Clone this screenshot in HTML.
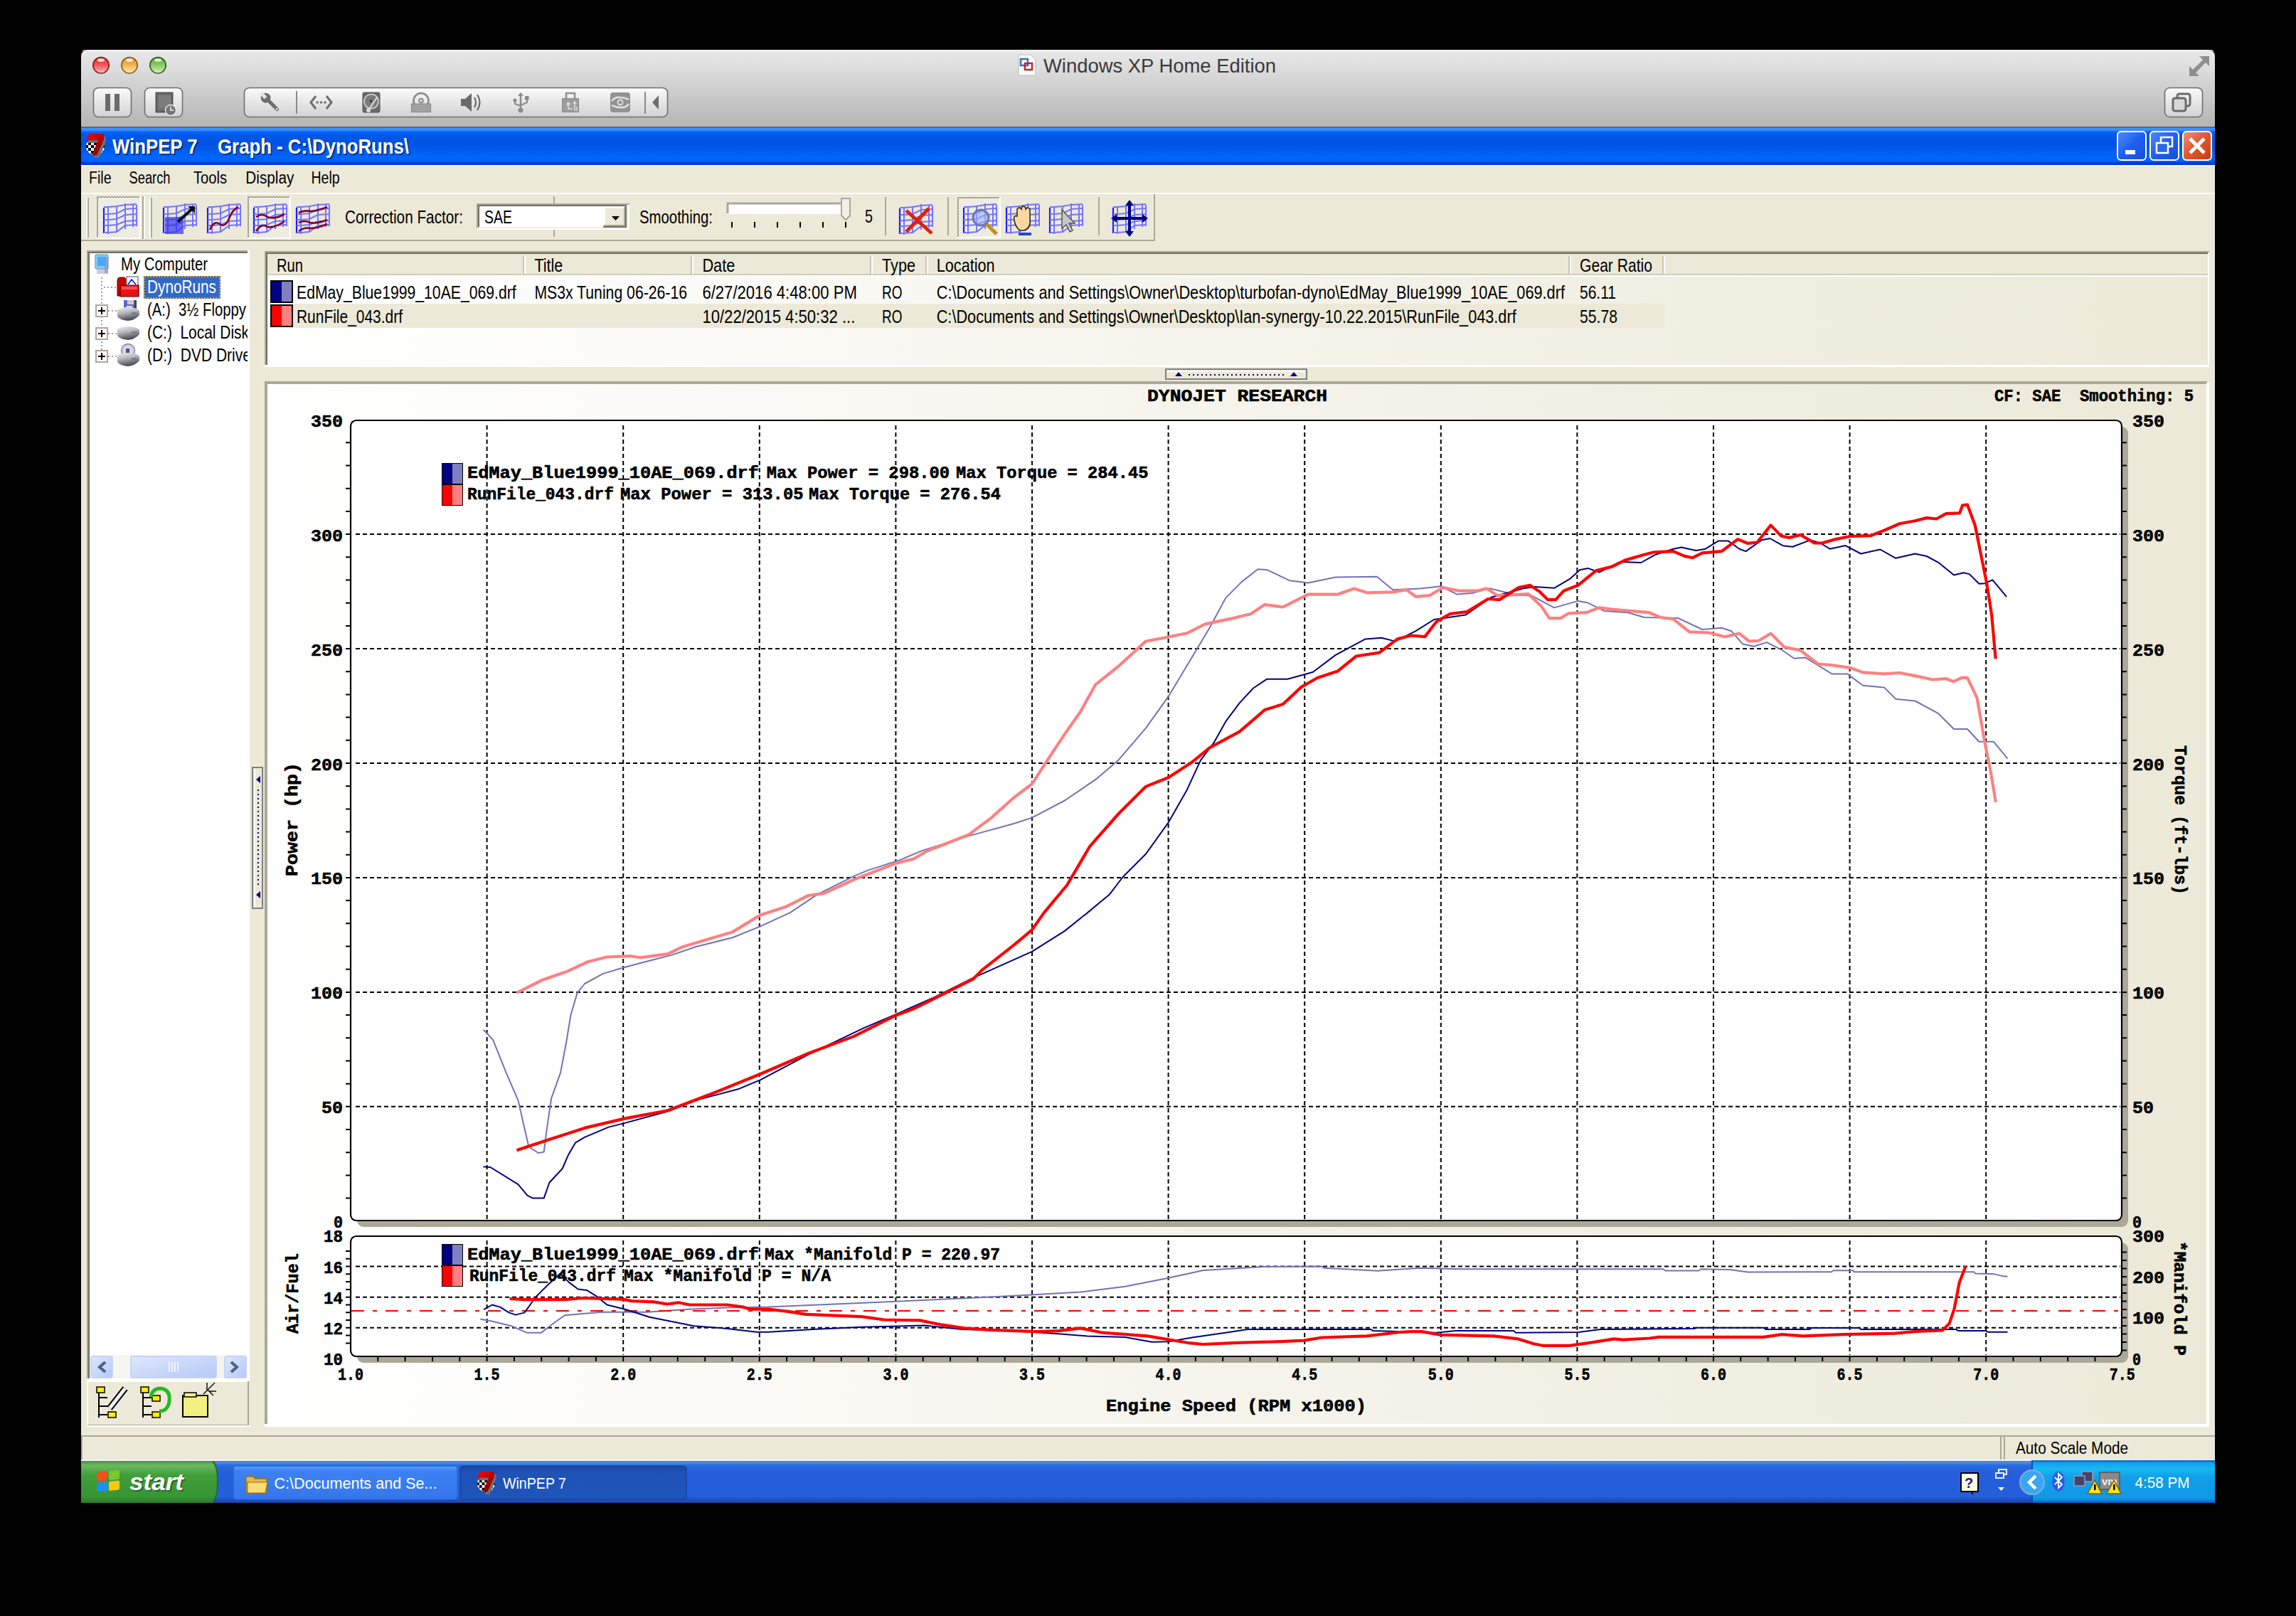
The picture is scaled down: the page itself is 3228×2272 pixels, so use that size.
<!DOCTYPE html>
<html><head><meta charset="utf-8"><title>WinPEP 7</title>
<style>
html,body{margin:0;padding:0;background:#000;width:3228px;height:2272px;overflow:hidden}
svg{position:absolute;left:0;top:0;display:block}
text{white-space:pre}
</style></head><body>
<svg width="3228" height="2272" viewBox="0 0 3228 2272" shape-rendering="auto">
<defs>
<linearGradient id="macbar" x1="0" y1="0" x2="0" y2="1">
<stop offset="0" stop-color="#ececec"/><stop offset="0.06" stop-color="#e6e6e6"/>
<stop offset="1" stop-color="#b4b4b4"/></linearGradient>
<linearGradient id="macbtn" x1="0" y1="0" x2="0" y2="1">
<stop offset="0" stop-color="#fbfbfb"/><stop offset="1" stop-color="#d2d2d2"/></linearGradient>
<linearGradient id="tl_red" x1="0" y1="0" x2="0" y2="1">
<stop offset="0" stop-color="#e23a36"/><stop offset="0.45" stop-color="#f25252"/><stop offset="0.75" stop-color="#f68a8a"/><stop offset="1" stop-color="#f6cccc"/></linearGradient>
<linearGradient id="tl_yel" x1="0" y1="0" x2="0" y2="1">
<stop offset="0" stop-color="#e0902c"/><stop offset="0.45" stop-color="#f0b050"/><stop offset="0.75" stop-color="#f6d07a"/><stop offset="1" stop-color="#f8ecc0"/></linearGradient>
<linearGradient id="tl_grn" x1="0" y1="0" x2="0" y2="1">
<stop offset="0" stop-color="#5cae3e"/><stop offset="0.45" stop-color="#86c866"/><stop offset="0.75" stop-color="#b0dc8a"/><stop offset="1" stop-color="#e4f2d0"/></linearGradient>

<linearGradient id="xptitle" x1="0" y1="180" x2="0" y2="232" gradientUnits="userSpaceOnUse">
<stop offset="0" stop-color="#3e97ff"/><stop offset="0.07" stop-color="#3088ff"/><stop offset="0.1" stop-color="#0066ff"/>
<stop offset="0.2" stop-color="#0058e8"/><stop offset="0.42" stop-color="#0052e0"/><stop offset="0.62" stop-color="#005cf0"/>
<stop offset="0.8" stop-color="#0066ff"/><stop offset="0.9" stop-color="#0062f8"/><stop offset="0.93" stop-color="#0044d8"/><stop offset="1" stop-color="#0035c8"/></linearGradient>
<linearGradient id="xpbtn" x1="0" y1="0" x2="1" y2="1">
<stop offset="0" stop-color="#4f8cf7"/><stop offset="0.5" stop-color="#1f5ff0"/><stop offset="1" stop-color="#1450d8"/></linearGradient>
<linearGradient id="xpclose" x1="0" y1="0" x2="1" y2="1">
<stop offset="0" stop-color="#f0957a"/><stop offset="0.45" stop-color="#e05a32"/><stop offset="1" stop-color="#c83a10"/></linearGradient>
<linearGradient id="listbg" x1="0" y1="0" x2="1" y2="0">
<stop offset="0" stop-color="#ffffff"/><stop offset="1" stop-color="#ece9d8"/></linearGradient>
<linearGradient id="chartbg" x1="376" y1="0" x2="3102" y2="0" gradientUnits="userSpaceOnUse">
<stop offset="0" stop-color="#ffffff"/><stop offset="1" stop-color="#ece9d8"/></linearGradient>
<pattern id="checker" width="4" height="4" patternUnits="userSpaceOnUse">
<rect width="4" height="4" fill="#fbfaf6"/><rect width="2" height="2" fill="#e2dfcf"/><rect x="2" y="2" width="2" height="2" fill="#e2dfcf"/></pattern>
<linearGradient id="scrbtn" x1="0" y1="0" x2="1" y2="1">
<stop offset="0" stop-color="#dfe8fd"/><stop offset="1" stop-color="#b4c8f6"/></linearGradient>

<pattern id="flagchk" width="8" height="8" patternUnits="userSpaceOnUse">
<rect width="8" height="8" fill="#fff"/><rect width="4" height="4" fill="#000"/><rect x="4" y="4" width="4" height="4" fill="#000"/></pattern>
<linearGradient id="red7" x1="0" y1="0" x2="1" y2="1"><stop offset="0" stop-color="#ff0000"/><stop offset="0.6" stop-color="#b00000"/><stop offset="1" stop-color="#500000"/></linearGradient>
<clipPath id="clipTree"><rect x="126" y="356" width="222" height="1548"/></clipPath>
<linearGradient id="drivebody" x1="0" y1="0" x2="0.3" y2="1">
<stop offset="0" stop-color="#f2f2f2"/><stop offset="0.45" stop-color="#b8b8bc"/><stop offset="1" stop-color="#4c4c58"/></linearGradient>
<radialGradient id="cdg" cx="0.5" cy="0.5" r="0.5"><stop offset="0" stop-color="#fff"/><stop offset="0.25" stop-color="#f0c8f0"/><stop offset="0.6" stop-color="#d8d8ff"/><stop offset="1" stop-color="#b8b8e8"/></radialGradient>
<clipPath id="clipU"><rect x="494" y="592" width="2488" height="1123"/></clipPath>
<clipPath id="clipL"><rect x="494" y="1739" width="2488" height="167"/></clipPath>
<linearGradient id="taskbar" x1="0" y1="2053" x2="0" y2="2113" gradientUnits="userSpaceOnUse">
<stop offset="0" stop-color="#3168d5"/><stop offset="0.05" stop-color="#4993e6"/><stop offset="0.12" stop-color="#2a6ae0"/>
<stop offset="0.3" stop-color="#245edb"/><stop offset="0.85" stop-color="#245edb"/><stop offset="1" stop-color="#1941a5"/></linearGradient>
<linearGradient id="startbtn" x1="0" y1="2053" x2="0" y2="2113" gradientUnits="userSpaceOnUse">
<stop offset="0" stop-color="#3c8d3a"/><stop offset="0.12" stop-color="#6abb5e"/><stop offset="0.35" stop-color="#3f9e3a"/>
<stop offset="0.85" stop-color="#379534"/><stop offset="1" stop-color="#2b7a2a"/></linearGradient>
<linearGradient id="tray" x1="0" y1="2053" x2="0" y2="2113" gradientUnits="userSpaceOnUse">
<stop offset="0" stop-color="#0c59b9"/><stop offset="0.06" stop-color="#139ee9"/><stop offset="0.2" stop-color="#18b9f2"/>
<stop offset="0.4" stop-color="#109fe8"/><stop offset="0.9" stop-color="#0f98e6"/><stop offset="1" stop-color="#095bc9"/></linearGradient>
<linearGradient id="task1" x1="0" y1="2061" x2="0" y2="2108" gradientUnits="userSpaceOnUse">
<stop offset="0" stop-color="#5a9cf7"/><stop offset="0.15" stop-color="#3c81f3"/><stop offset="1" stop-color="#3677ec"/></linearGradient>
<linearGradient id="task2" x1="0" y1="2061" x2="0" y2="2108" gradientUnits="userSpaceOnUse">
<stop offset="0" stop-color="#1a47a8"/><stop offset="0.2" stop-color="#1e52b7"/><stop offset="1" stop-color="#1f55ba"/></linearGradient>

</defs>
<rect x="0" y="0" width="3228" height="2272" fill="#000"/>
<path d="M114,180 L114,80 Q114,70 124,70 L3104,70 Q3114,70 3114,80 L3114,180 Z" fill="url(#macbar)"/>
<path d="M116,71 L3112,71" stroke="#f8f8f8" stroke-width="1"/>
<rect x="114" y="178" width="3000" height="2" fill="#666" />
<circle cx="142" cy="91.8" r="11.2" fill="url(#tl_red)" stroke="#8c1414" stroke-width="1.6"/>
<ellipse cx="142" cy="84.5" rx="5" ry="2.2" fill="#fff" fill-opacity="0.8"/>
<circle cx="182" cy="91.8" r="11.2" fill="url(#tl_yel)" stroke="#8a5c14" stroke-width="1.6"/>
<ellipse cx="182" cy="84.5" rx="5" ry="2.2" fill="#fff" fill-opacity="0.8"/>
<circle cx="222" cy="91.8" r="11.2" fill="url(#tl_grn)" stroke="#2e5e1e" stroke-width="1.6"/>
<ellipse cx="222" cy="84.5" rx="5" ry="2.2" fill="#fff" fill-opacity="0.8"/>
<g transform="translate(1432,77)"><path d="M0,0 h17 l7,7 v22 h-24 z" fill="#fafafa" stroke="#bbb" stroke-width="1"/><rect x="3" y="6" width="10" height="9" fill="none" stroke="#3b6fb6" stroke-width="2.5"/><rect x="9" y="12" width="10" height="9" fill="none" stroke="#c0272d" stroke-width="2.5"/></g>
<text x="1467" y="102" font-family='"Liberation Sans", sans-serif' font-size="28.5" font-weight="normal" fill="#3a3a3a" text-anchor="start" textLength="327" lengthAdjust="spacingAndGlyphs" >Windows XP Home Edition</text>
<g fill="#8e8e8e" stroke="none"><path d="M3106,79 V93 L3101,88 L3094,95 L3090,91 L3097,84 L3092,79 Z"/><path d="M3078,107 V93 L3083,98 L3090,91 L3094,95 L3087,102 L3092,107 Z"/></g>
<rect x="131.5" y="123.5" width="53" height="41" rx="7" fill="url(#macbtn)" stroke="#6f6f6f" stroke-width="1.6"/>
<rect x="148" y="132" width="7" height="24" fill="#6a6a6a"/><rect x="161" y="132" width="7" height="24" fill="#6a6a6a"/>
<rect x="203.5" y="123.5" width="53" height="41" rx="7" fill="url(#macbtn)" stroke="#6f6f6f" stroke-width="1.6"/>
<rect x="219.5" y="130.5" width="23" height="27" fill="#6e6e6e" stroke="#555" stroke-width="2"/><rect x="223" y="134" width="17" height="18" fill="#7c7c7c"/><circle cx="240" cy="155" r="7.5" fill="#757575" stroke="#e6e6e6" stroke-width="1.5"/><path d="M240,150 v5 h4" stroke="#eee" stroke-width="1.6" fill="none"/>
<rect x="343.5" y="123.5" width="595" height="41" rx="7" fill="url(#macbtn)" stroke="#6f6f6f" stroke-width="1.6"/>
<rect x="3043.5" y="123.5" width="53" height="41" rx="7" fill="url(#macbtn)" stroke="#6f6f6f" stroke-width="1.6"/>
<rect x="3061" y="132" width="18" height="17" rx="3" fill="none" stroke="#6a6a6a" stroke-width="3"/><rect x="3055" y="138" width="18" height="18" rx="3" fill="#d8d8d8" stroke="#6a6a6a" stroke-width="3"/>
<g transform="translate(380,144) rotate(-45)"><rect x="-2.5" y="-6" width="5" height="22" rx="2.5" fill="#6e6e6e"/><circle cx="0" cy="-9" r="7" fill="#6e6e6e"/><rect x="-2.5" y="-18" width="5" height="9" fill="#e2e2e2"/><circle cx="0" cy="13" r="1.5" fill="#ddd"/></g>
<rect x="416" y="128" width="2" height="32" fill="#8a8a8a" />
<path d="M444,135 l-7,9 l7,9 M459,135 l7,9 l-7,9" stroke="#6e6e6e" stroke-width="3" fill="none"/><circle cx="446" cy="144" r="1.8" fill="#6e6e6e"/><circle cx="451.5" cy="144" r="1.8" fill="#6e6e6e"/><circle cx="457" cy="144" r="1.8" fill="#6e6e6e"/>
<rect x="510" y="130" width="24" height="28" rx="2" fill="#6a6a6a" stroke="#555" stroke-width="1"/><circle cx="522" cy="142.5" r="10" fill="#7a7a7a" stroke="#d6d6d6" stroke-width="1.6"/><path d="M518,155 L530,137" stroke="#e0e0e0" stroke-width="2"/><circle cx="518" cy="155" r="3" fill="#d8d8d8"/><circle cx="521.5" cy="142" r="1.8" fill="#333"/>
<circle cx="592" cy="141.5" r="10.5" fill="none" stroke="#8a8a8a" stroke-width="2.6"/><circle cx="592" cy="141.5" r="2.8" fill="none" stroke="#8a8a8a" stroke-width="2"/><rect x="578.5" y="146" width="27" height="11.5" fill="#a2a2a2" stroke="#8c8c8c" stroke-width="1.2"/>
<path d="M648,139 h6 l9,-8 v26 l-9,-8 h-6 z" fill="#6a6a6a"/><path d="M667,137 q4,7 0,14 M671,133 q7,11 0,22" stroke="#6a6a6a" stroke-width="2.2" fill="none"/>
<path d="M732,131 v23" stroke="#8c8c8c" stroke-width="2.5"/><path d="M728,135 l4,-5 l4,5 z" fill="#8c8c8c"/><circle cx="732" cy="155" r="3.5" fill="#8c8c8c"/><path d="M724,141 v5 l8,3 M741,139 v5 l-9,4" stroke="#8c8c8c" stroke-width="2" fill="none"/><circle cx="724" cy="141" r="2.6" fill="#8c8c8c"/><rect x="738" y="135" width="5.5" height="5.5" fill="#8c8c8c"/>
<rect x="790.5" y="138.5" width="23" height="19" fill="#9c9c9c" stroke="#8a8a8a" stroke-width="1"/><path d="M796,138 v-7 h12 v7" stroke="#8e8e8e" stroke-width="2.5" fill="none"/><circle cx="799" cy="146" r="2.5" fill="#dadada"/><path d="M799,148 v5 h6 M808,156 v-13 M806,146 l2,-3 l2,3 M811,156 v-6" stroke="#dadada" stroke-width="1.6" fill="none"/>
<rect x="858" y="130" width="28" height="28" rx="4" fill="#929292"/><path d="M860,142 q4,-6 12,-5 q6,0 12,3 M884,146 q-4,6 -12,5 q-6,0 -12,-3" stroke="#dedede" stroke-width="2.6" fill="none"/><circle cx="872" cy="144" r="3.5" fill="none" stroke="#dedede" stroke-width="2"/>
<rect x="906" y="129" width="2" height="31" fill="#8a8a8a" />
<path d="M926,134 v20 l-9,-10 z" fill="#6e6e6e"/>
<rect x="114" y="180" width="3000" height="1873" fill="#ece9d8" />
<rect x="114" y="180" width="3000" height="52" fill="url(#xptitle)" />
<g transform="translate(120,188) scale(1.0)"><ellipse cx="14" cy="18" rx="13" ry="12" fill="url(#flagchk)"/><path d="M6,2 H27 V9 L17,32 H10 L19,11 H2 V8 Z" fill="#6e6e6e" transform="translate(2,2)"/><path d="M6,0 H26 V8 L16,30 H9 L18,9 H2 V5 Z" fill="url(#red7)"/></g>
<text x="160" y="218" font-family='"Liberation Sans", sans-serif' font-size="30" font-weight="bold" fill="#0a246a" textLength="417" lengthAdjust="spacingAndGlyphs" opacity="0.7">WinPEP 7    Graph - C:\DynoRuns\</text>
<text x="158" y="216" font-family='"Liberation Sans", sans-serif' font-size="30" font-weight="bold" fill="#fff" text-anchor="start" textLength="417" lengthAdjust="spacingAndGlyphs" >WinPEP 7    Graph - C:\DynoRuns\</text>
<rect x="2977" y="185" width="40" height="40" rx="5" fill="url(#xpbtn)" stroke="#fff" stroke-width="2"/><rect x="2988" y="211" width="14" height="6" fill="#fff"/>
<rect x="3023" y="185" width="40" height="40" rx="5" fill="url(#xpbtn)" stroke="#fff" stroke-width="2"/><rect x="3038" y="193" width="16" height="13" fill="none" stroke="#fff" stroke-width="2.5"/><rect x="3032" y="201" width="16" height="14" fill="#2a68ee" stroke="#fff" stroke-width="2.5"/>
<rect x="3069" y="185" width="40" height="40" rx="5" fill="url(#xpclose)" stroke="#fff" stroke-width="2"/><path d="M3079,195 l20,20 M3099,195 l-20,20" stroke="#fff" stroke-width="5"/>
<rect x="114" y="232" width="3000" height="2" fill="#fbf6e6" />
<text x="125" y="257.5" font-family='"Liberation Sans", sans-serif' font-size="23" font-weight="normal" fill="#000" text-anchor="start" textLength="31.5" lengthAdjust="spacingAndGlyphs" >File</text>
<text x="181.5" y="257.5" font-family='"Liberation Sans", sans-serif' font-size="23" font-weight="normal" fill="#000" text-anchor="start" textLength="58" lengthAdjust="spacingAndGlyphs" >Search</text>
<text x="272" y="257.5" font-family='"Liberation Sans", sans-serif' font-size="23" font-weight="normal" fill="#000" text-anchor="start" textLength="47" lengthAdjust="spacingAndGlyphs" >Tools</text>
<text x="345.3" y="257.5" font-family='"Liberation Sans", sans-serif' font-size="23" font-weight="normal" fill="#000" text-anchor="start" textLength="68" lengthAdjust="spacingAndGlyphs" >Display</text>
<text x="437.5" y="257.5" font-family='"Liberation Sans", sans-serif' font-size="23" font-weight="normal" fill="#000" text-anchor="start" textLength="40.2" lengthAdjust="spacingAndGlyphs" >Help</text>
<rect x="114" y="271" width="1510" height="2" fill="#fff" />
<rect x="114" y="337" width="1510" height="2" fill="#aca899" />
<rect x="1622" y="273" width="2" height="66" fill="#aca899" />
<rect x="114" y="271" width="3000" height="2" fill="#fff" />
<rect x="121" y="278" width="2" height="56" fill="#fff" />
<rect x="123" y="278" width="2" height="56" fill="#aca899" />
<rect x="210" y="278" width="2" height="56" fill="#fff" />
<rect x="212" y="278" width="2" height="56" fill="#aca899" />
<rect x="200" y="276" width="2" height="60" fill="#aca899" />
<rect x="202" y="276" width="2" height="60" fill="#fff" />
<rect x="136" y="276" width="62" height="60" fill="url(#checker)" />
<rect x="136" y="276" width="62" height="2" fill="#aca899" />
<rect x="136" y="276" width="2" height="60" fill="#aca899" />
<rect x="136" y="334" width="62" height="2" fill="#fff" />
<rect x="196" y="276" width="2" height="60" fill="#fff" />
<rect x="348" y="276" width="61" height="60" fill="url(#checker)" />
<rect x="348" y="276" width="61" height="2" fill="#aca899" />
<rect x="348" y="276" width="2" height="60" fill="#aca899" />
<rect x="348" y="334" width="61" height="2" fill="#fff" />
<rect x="407" y="276" width="2" height="60" fill="#fff" />
<rect x="1346" y="277" width="61" height="58" fill="url(#checker)" />
<rect x="1346" y="277" width="61" height="2" fill="#aca899" />
<rect x="1346" y="277" width="2" height="58" fill="#aca899" />
<rect x="1346" y="333" width="61" height="2" fill="#fff" />
<rect x="1405" y="277" width="2" height="58" fill="#fff" />
<g transform="translate(145,285)"><line x1="7" y1="6" x2="7" y2="44" stroke="#7474ff" stroke-width="2"/><line x1="19" y1="4" x2="19" y2="42" stroke="#7474ff" stroke-width="2"/><line x1="31" y1="1" x2="31" y2="37" stroke="#7474ff" stroke-width="2"/><line x1="42" y1="2" x2="42" y2="34" stroke="#7474ff" stroke-width="2"/><line x1="47" y1="3" x2="47" y2="33" stroke="#7474ff" stroke-width="2"/><line x1="1" y1="7" x2="1" y2="43" stroke="#1a1aff" stroke-width="2.2"/><polyline points="1,6 7,6 19,5 31,3 47,2" fill="none" stroke="#7474ff" stroke-width="2"/><polyline points="1,16 7,16 19,15 31,9 47,8" fill="none" stroke="#7474ff" stroke-width="2"/><polyline points="1,24 7,24 19,23 31,17 47,16" fill="none" stroke="#7474ff" stroke-width="2"/><polyline points="1,32 7,32 19,31 31,26 47,25" fill="none" stroke="#7474ff" stroke-width="2"/><polyline points="1,42 7,42 19,41 31,32 47,31" fill="none" stroke="#7474ff" stroke-width="2"/></g>
<g transform="translate(229,285)"><line x1="7" y1="6" x2="7" y2="44" stroke="#7474ff" stroke-width="2"/><line x1="19" y1="4" x2="19" y2="42" stroke="#7474ff" stroke-width="2"/><line x1="31" y1="1" x2="31" y2="37" stroke="#7474ff" stroke-width="2"/><line x1="42" y1="2" x2="42" y2="34" stroke="#7474ff" stroke-width="2"/><line x1="47" y1="3" x2="47" y2="33" stroke="#7474ff" stroke-width="2"/><line x1="1" y1="7" x2="1" y2="43" stroke="#1a1aff" stroke-width="2.2"/><polyline points="1,6 7,6 19,5 31,3 47,2" fill="none" stroke="#7474ff" stroke-width="2"/><polyline points="1,16 7,16 19,15 31,9 47,8" fill="none" stroke="#7474ff" stroke-width="2"/><polyline points="1,24 7,24 19,23 31,17 47,16" fill="none" stroke="#7474ff" stroke-width="2"/><polyline points="1,32 7,32 19,31 31,26 47,25" fill="none" stroke="#7474ff" stroke-width="2"/><polyline points="1,42 7,42 19,41 31,32 47,31" fill="none" stroke="#7474ff" stroke-width="2"/></g>
<rect x="232" y="305" width="26" height="24" fill="#3333ee" opacity="0.7"/><path d="M250,312 L272,292" stroke="#111" stroke-width="4"/><path d="M264,290 h10 v10 z" fill="#111"/>
<g transform="translate(291,285)"><line x1="7" y1="6" x2="7" y2="44" stroke="#7474ff" stroke-width="2"/><line x1="19" y1="4" x2="19" y2="42" stroke="#7474ff" stroke-width="2"/><line x1="31" y1="1" x2="31" y2="37" stroke="#7474ff" stroke-width="2"/><line x1="42" y1="2" x2="42" y2="34" stroke="#7474ff" stroke-width="2"/><line x1="47" y1="3" x2="47" y2="33" stroke="#7474ff" stroke-width="2"/><line x1="1" y1="7" x2="1" y2="43" stroke="#1a1aff" stroke-width="2.2"/><polyline points="1,6 7,6 19,5 31,3 47,2" fill="none" stroke="#7474ff" stroke-width="2"/><polyline points="1,16 7,16 19,15 31,9 47,8" fill="none" stroke="#7474ff" stroke-width="2"/><polyline points="1,24 7,24 19,23 31,17 47,16" fill="none" stroke="#7474ff" stroke-width="2"/><polyline points="1,32 7,32 19,31 31,26 47,25" fill="none" stroke="#7474ff" stroke-width="2"/><polyline points="1,42 7,42 19,41 31,32 47,31" fill="none" stroke="#7474ff" stroke-width="2"/><path d="M4,38 q6,-14 14,-8 q8,6 14,-10 q4,-10 12,-14" fill="none" stroke="#800030" stroke-width="2.6"/></g>
<g transform="translate(356,285)"><line x1="7" y1="6" x2="7" y2="44" stroke="#7474ff" stroke-width="2"/><line x1="19" y1="4" x2="19" y2="42" stroke="#7474ff" stroke-width="2"/><line x1="31" y1="1" x2="31" y2="37" stroke="#7474ff" stroke-width="2"/><line x1="42" y1="2" x2="42" y2="34" stroke="#7474ff" stroke-width="2"/><line x1="47" y1="3" x2="47" y2="33" stroke="#7474ff" stroke-width="2"/><line x1="1" y1="7" x2="1" y2="43" stroke="#1a1aff" stroke-width="2.2"/><polyline points="1,6 7,6 19,5 31,3 47,2" fill="none" stroke="#7474ff" stroke-width="2"/><polyline points="1,16 7,16 19,15 31,9 47,8" fill="none" stroke="#7474ff" stroke-width="2"/><polyline points="1,24 7,24 19,23 31,17 47,16" fill="none" stroke="#7474ff" stroke-width="2"/><polyline points="1,32 7,32 19,31 31,26 47,25" fill="none" stroke="#7474ff" stroke-width="2"/><polyline points="1,42 7,42 19,41 31,32 47,31" fill="none" stroke="#7474ff" stroke-width="2"/><path d="M4,20 q8,-6 16,0 q10,4 24,-4" fill="none" stroke="#800030" stroke-width="2.6"/><path d="M4,40 q8,-12 16,-6 q10,2 24,-8" fill="none" stroke="#800030" stroke-width="2.6"/></g>
<g transform="translate(416,285)"><line x1="7" y1="6" x2="7" y2="44" stroke="#7474ff" stroke-width="2"/><line x1="19" y1="4" x2="19" y2="42" stroke="#7474ff" stroke-width="2"/><line x1="31" y1="1" x2="31" y2="37" stroke="#7474ff" stroke-width="2"/><line x1="42" y1="2" x2="42" y2="34" stroke="#7474ff" stroke-width="2"/><line x1="47" y1="3" x2="47" y2="33" stroke="#7474ff" stroke-width="2"/><line x1="1" y1="7" x2="1" y2="43" stroke="#1a1aff" stroke-width="2.2"/><polyline points="1,6 7,6 19,5 31,3 47,2" fill="none" stroke="#7474ff" stroke-width="2"/><polyline points="1,16 7,16 19,15 31,9 47,8" fill="none" stroke="#7474ff" stroke-width="2"/><polyline points="1,24 7,24 19,23 31,17 47,16" fill="none" stroke="#7474ff" stroke-width="2"/><polyline points="1,32 7,32 19,31 31,26 47,25" fill="none" stroke="#7474ff" stroke-width="2"/><polyline points="1,42 7,42 19,41 31,32 47,31" fill="none" stroke="#7474ff" stroke-width="2"/><path d="M4,14 q8,-4 16,-2 q10,0 24,-6" fill="none" stroke="#800030" stroke-width="2.6"/><path d="M4,28 q8,-4 16,0 q10,2 24,-4" fill="none" stroke="#800030" stroke-width="2.6"/><path d="M4,40 q8,-6 16,-4 q10,0 24,-6" fill="none" stroke="#800030" stroke-width="2.6"/></g>
<text x="485" y="314" font-family='"Liberation Sans", sans-serif' font-size="25" font-weight="normal" fill="#000" text-anchor="start" textLength="166" lengthAdjust="spacingAndGlyphs" >Correction Factor:</text>
<rect x="670" y="286" width="215" height="37" fill="#fff" />
<rect x="670" y="286" width="215" height="2" fill="#aca899" />
<rect x="670" y="286" width="2" height="35" fill="#aca899" />
<rect x="672" y="288" width="211" height="2" fill="#716f64" />
<rect x="672" y="288" width="2" height="31" fill="#716f64" />
<rect x="881" y="288" width="2" height="33" fill="#f1efe2" />
<rect x="672" y="319" width="211" height="2" fill="#f1efe2" />
<rect x="849" y="291" width="31" height="27" fill="#ece9d8" />
<rect x="849" y="291" width="29" height="2" fill="#fff" />
<rect x="849" y="291" width="2" height="25" fill="#fff" />
<rect x="877" y="291" width="2" height="27" fill="#aca899" />
<rect x="849" y="316" width="30" height="2" fill="#aca899" />
<rect x="879" y="290" width="2" height="30" fill="#716f64" />
<rect x="848" y="318" width="33" height="2" fill="#716f64" />
<path d="M860,304 h11 l-5.5,6 z" fill="#000"/>
<text x="681" y="314" font-family='"Liberation Sans", sans-serif' font-size="25" font-weight="normal" fill="#000" text-anchor="start" textLength="39" lengthAdjust="spacingAndGlyphs" >SAE</text>
<rect x="778" y="276" width="2" height="10" fill="#aca899" />
<rect x="778" y="323" width="2" height="10" fill="#aca899" />
<text x="899" y="314" font-family='"Liberation Sans", sans-serif' font-size="25" font-weight="normal" fill="#000" text-anchor="start" textLength="103" lengthAdjust="spacingAndGlyphs" >Smoothing:</text>
<rect x="1022" y="285" width="173" height="16" fill="#fff" />
<path d="M1023,300 v-14 h171" stroke="#aca899" stroke-width="3" fill="none"/>
<path d="M1183,279 h12 v24 l-6,6 l-6,-6 z" fill="#f2f0e6" stroke="#aca899" stroke-width="2"/>
<rect x="1028" y="312" width="2" height="8" fill="#000" />
<rect x="1060" y="312" width="2" height="8" fill="#000" />
<rect x="1092" y="312" width="2" height="8" fill="#000" />
<rect x="1124" y="312" width="2" height="8" fill="#000" />
<rect x="1156" y="312" width="2" height="8" fill="#000" />
<rect x="1188" y="312" width="2" height="8" fill="#000" />
<text x="1216" y="313" font-family='"Liberation Sans", sans-serif' font-size="25" font-weight="normal" fill="#000" text-anchor="start" textLength="11" lengthAdjust="spacingAndGlyphs" >5</text>
<rect x="1244" y="277" width="2" height="54" fill="#aca899" />
<g transform="translate(1264,286)"><line x1="7" y1="6" x2="7" y2="44" stroke="#7474ff" stroke-width="2"/><line x1="19" y1="4" x2="19" y2="42" stroke="#7474ff" stroke-width="2"/><line x1="31" y1="1" x2="31" y2="37" stroke="#7474ff" stroke-width="2"/><line x1="42" y1="2" x2="42" y2="34" stroke="#7474ff" stroke-width="2"/><line x1="47" y1="3" x2="47" y2="33" stroke="#7474ff" stroke-width="2"/><line x1="1" y1="7" x2="1" y2="43" stroke="#1a1aff" stroke-width="2.2"/><polyline points="1,6 7,6 19,5 31,3 47,2" fill="none" stroke="#7474ff" stroke-width="2"/><polyline points="1,16 7,16 19,15 31,9 47,8" fill="none" stroke="#7474ff" stroke-width="2"/><polyline points="1,24 7,24 19,23 31,17 47,16" fill="none" stroke="#7474ff" stroke-width="2"/><polyline points="1,32 7,32 19,31 31,26 47,25" fill="none" stroke="#7474ff" stroke-width="2"/><polyline points="1,42 7,42 19,41 31,32 47,31" fill="none" stroke="#7474ff" stroke-width="2"/></g>
<path d="M1274,296 L1310,328 M1306,293 L1274,326" stroke="#e02010" stroke-width="5"/>
<rect x="1332" y="277" width="2" height="54" fill="#aca899" />
<g transform="translate(1354,285)"><line x1="7" y1="6" x2="7" y2="44" stroke="#7474ff" stroke-width="2"/><line x1="19" y1="4" x2="19" y2="42" stroke="#7474ff" stroke-width="2"/><line x1="31" y1="1" x2="31" y2="37" stroke="#7474ff" stroke-width="2"/><line x1="42" y1="2" x2="42" y2="34" stroke="#7474ff" stroke-width="2"/><line x1="47" y1="3" x2="47" y2="33" stroke="#7474ff" stroke-width="2"/><line x1="1" y1="7" x2="1" y2="43" stroke="#1a1aff" stroke-width="2.2"/><polyline points="1,6 7,6 19,5 31,3 47,2" fill="none" stroke="#7474ff" stroke-width="2"/><polyline points="1,16 7,16 19,15 31,9 47,8" fill="none" stroke="#7474ff" stroke-width="2"/><polyline points="1,24 7,24 19,23 31,17 47,16" fill="none" stroke="#7474ff" stroke-width="2"/><polyline points="1,32 7,32 19,31 31,26 47,25" fill="none" stroke="#7474ff" stroke-width="2"/><polyline points="1,42 7,42 19,41 31,32 47,31" fill="none" stroke="#7474ff" stroke-width="2"/></g>
<circle cx="1379" cy="306" r="11" fill="#9fb0ff" fill-opacity="0.6" stroke="#6a78b0" stroke-width="3"/><path d="M1387,315 l14,14" stroke="#c89010" stroke-width="5"/>
<g transform="translate(1414,285)"><line x1="7" y1="6" x2="7" y2="44" stroke="#7474ff" stroke-width="2"/><line x1="19" y1="4" x2="19" y2="42" stroke="#7474ff" stroke-width="2"/><line x1="31" y1="1" x2="31" y2="37" stroke="#7474ff" stroke-width="2"/><line x1="42" y1="2" x2="42" y2="34" stroke="#7474ff" stroke-width="2"/><line x1="47" y1="3" x2="47" y2="33" stroke="#7474ff" stroke-width="2"/><line x1="1" y1="7" x2="1" y2="43" stroke="#1a1aff" stroke-width="2.2"/><polyline points="1,6 7,6 19,5 31,3 47,2" fill="none" stroke="#7474ff" stroke-width="2"/><polyline points="1,16 7,16 19,15 31,9 47,8" fill="none" stroke="#7474ff" stroke-width="2"/><polyline points="1,24 7,24 19,23 31,17 47,16" fill="none" stroke="#7474ff" stroke-width="2"/><polyline points="1,32 7,32 19,31 31,26 47,25" fill="none" stroke="#7474ff" stroke-width="2"/><polyline points="1,42 7,42 19,41 31,32 47,31" fill="none" stroke="#7474ff" stroke-width="2"/></g>
<path d="M1426,310 q-2,-8 4,-6 v-10 q3,-4 6,0 v-2 q3,-4 6,0 v2 q3,-4 6,0 v14 q2,12 -8,16 h-6 q-6,-4 -8,-14 z" fill="#fcd8a0" stroke="#222" stroke-width="1.5"/><rect x="1432" y="327" width="18" height="4" fill="#2244dd"/>
<g transform="translate(1475,285)"><line x1="7" y1="6" x2="7" y2="44" stroke="#7474ff" stroke-width="2"/><line x1="19" y1="4" x2="19" y2="42" stroke="#7474ff" stroke-width="2"/><line x1="31" y1="1" x2="31" y2="37" stroke="#7474ff" stroke-width="2"/><line x1="42" y1="2" x2="42" y2="34" stroke="#7474ff" stroke-width="2"/><line x1="47" y1="3" x2="47" y2="33" stroke="#7474ff" stroke-width="2"/><line x1="1" y1="7" x2="1" y2="43" stroke="#1a1aff" stroke-width="2.2"/><polyline points="1,6 7,6 19,5 31,3 47,2" fill="none" stroke="#7474ff" stroke-width="2"/><polyline points="1,16 7,16 19,15 31,9 47,8" fill="none" stroke="#7474ff" stroke-width="2"/><polyline points="1,24 7,24 19,23 31,17 47,16" fill="none" stroke="#7474ff" stroke-width="2"/><polyline points="1,32 7,32 19,31 31,26 47,25" fill="none" stroke="#7474ff" stroke-width="2"/><polyline points="1,42 7,42 19,41 31,32 47,31" fill="none" stroke="#7474ff" stroke-width="2"/></g>
<path d="M1493,295 v26 l6,-5 l5,10 l4,-2 l-5,-10 h8 z" fill="#c8c8c8" stroke="#555" stroke-width="1.5"/>
<rect x="1544" y="277" width="2" height="54" fill="#aca899" />
<g transform="translate(1564,285)"><line x1="7" y1="6" x2="7" y2="44" stroke="#7474ff" stroke-width="2"/><line x1="19" y1="4" x2="19" y2="42" stroke="#7474ff" stroke-width="2"/><line x1="31" y1="1" x2="31" y2="37" stroke="#7474ff" stroke-width="2"/><line x1="42" y1="2" x2="42" y2="34" stroke="#7474ff" stroke-width="2"/><line x1="47" y1="3" x2="47" y2="33" stroke="#7474ff" stroke-width="2"/><line x1="1" y1="7" x2="1" y2="43" stroke="#1a1aff" stroke-width="2.2"/><polyline points="1,6 7,6 19,5 31,3 47,2" fill="none" stroke="#7474ff" stroke-width="2"/><polyline points="1,16 7,16 19,15 31,9 47,8" fill="none" stroke="#7474ff" stroke-width="2"/><polyline points="1,24 7,24 19,23 31,17 47,16" fill="none" stroke="#7474ff" stroke-width="2"/><polyline points="1,32 7,32 19,31 31,26 47,25" fill="none" stroke="#7474ff" stroke-width="2"/><polyline points="1,42 7,42 19,41 31,32 47,31" fill="none" stroke="#7474ff" stroke-width="2"/></g>
<path d="M1588,284 v46 M1565,307 h46" stroke="#000080" stroke-width="4"/><path d="M1588,281 l-6,8 h12 z M1588,333 l-6,-8 h12 z M1562,307 l8,-6 v12 z M1614,307 l-8,-6 v12 z" fill="#000080"/>
<rect x="122" y="352" width="228" height="1654" fill="#fff" />
<rect x="122" y="352" width="228" height="2" fill="#aca899" />
<rect x="122" y="352" width="2" height="1588" fill="#aca899" />
<rect x="124" y="354" width="224" height="2" fill="#716f64" />
<rect x="124" y="354" width="2" height="1584" fill="#716f64" />
<rect x="348" y="352" width="3" height="1588" fill="#fff" />
<rect x="122" y="1938" width="229" height="3" fill="#fff" />
<g transform="translate(132,356)"><rect x="2" y="2" width="18" height="20" rx="2" fill="#7fc8ff" stroke="#8aa" stroke-width="1.5"/><rect x="5" y="5" width="12" height="13" fill="#49a8f0"/><rect x="4" y="23" width="16" height="6" fill="#ccd" /><rect x="15" y="6" width="5" height="22" fill="#8888cc" opacity="0.6"/></g>
<g clip-path="url(#clipTree)">
<text x="170" y="380" font-family='"Liberation Sans", sans-serif' font-size="25" font-weight="normal" fill="#000" text-anchor="start" textLength="122" lengthAdjust="spacingAndGlyphs" >My Computer</text>
<path d="M143,390 V500 M146,404 H164 M152,437 H164 M152,469 H164 M152,501 H164" stroke="#a0a0a0" stroke-width="2" stroke-dasharray="2,3"/>
<g transform="translate(164,388)"><path d="M1,6 q0,-4 4,-4 h6 l3,4 v22 h-13 z" fill="#cc0000" stroke="#600" stroke-width="1"/><rect x="14" y="1" width="16" height="14" fill="#fff" stroke="#888" stroke-width="1.5"/><path d="M16,12 l5,-7 l6,7" stroke="#00f" stroke-width="1.5" fill="none"/><path d="M5,13 h26 v16 h-26 z" fill="#ee1111" stroke="#600" stroke-width="1.2"/><path d="M7,15 h22 v4 h-22 z" fill="#ff8080" opacity="0.6"/></g>
<rect x="202" y="388" width="108" height="32" fill="#316ac5" />
<rect x="203" y="389" width="106" height="30" fill="none" stroke="#e59a28" stroke-width="2" stroke-dasharray="2,2"/>
<text x="207" y="412" font-family='"Liberation Sans", sans-serif' font-size="25" font-weight="normal" fill="#fff" text-anchor="start" textLength="97" lengthAdjust="spacingAndGlyphs" >DynoRuns</text>
<rect x="135" y="429" width="16" height="16" fill="#fff" stroke="#aca899" stroke-width="2"/><path d="M138,437 h10 M143,432 v10" stroke="#000" stroke-width="2"/>
<rect x="174" y="422" width="17" height="16" fill="#6464c8"/><rect x="179" y="422" width="9" height="6" fill="#c8c8c8"/><rect x="178" y="430" width="8" height="7" fill="#e0e0f0"/><rect x="189" y="422" width="3" height="16" fill="#444"/>
<path d="M165,436 Q170,432 180,432 Q192,432 196,437 L196,443 Q190,450 180,451 Q168,450 165,445 Z" fill="url(#drivebody)"/>
<rect x="185" y="439" width="7" height="3" fill="#7878a8"/>
<text x="207" y="444" font-family='"Liberation Sans", sans-serif' font-size="25" font-weight="normal" fill="#000" text-anchor="start" textLength="139" lengthAdjust="spacingAndGlyphs" >(A:)  3½ Floppy</text>
<rect x="135" y="461" width="16" height="16" fill="#fff" stroke="#aca899" stroke-width="2"/><path d="M138,469 h10 M143,464 v10" stroke="#000" stroke-width="2"/>
<path d="M165,463 Q170,459 180,459 Q192,459 196,464 L196,470 Q190,477 180,478 Q168,477 165,472 Z" fill="url(#drivebody)"/>
<rect x="185" y="466" width="7" height="3" fill="#7878a8"/>
<text x="207" y="476" font-family='"Liberation Sans", sans-serif' font-size="25" font-weight="normal" fill="#000" text-anchor="start" textLength="143" lengthAdjust="spacingAndGlyphs" >(C:)  Local Disk</text>
<rect x="135" y="493" width="16" height="16" fill="#fff" stroke="#aca899" stroke-width="2"/><path d="M138,501 h10 M143,496 v10" stroke="#000" stroke-width="2"/>
<circle cx="180" cy="493" r="9.5" fill="url(#cdg)" stroke="#909098" stroke-width="1.5"/><rect x="177" y="490" width="5" height="7" fill="#555"/>
<path d="M165,500 Q170,496 180,496 Q192,496 196,501 L196,507 Q190,514 180,515 Q168,514 165,509 Z" fill="url(#drivebody)"/>
<rect x="185" y="503" width="7" height="3" fill="#7878a8"/>
<text x="207" y="508" font-family='"Liberation Sans", sans-serif' font-size="25" font-weight="normal" fill="#000" text-anchor="start" textLength="146" lengthAdjust="spacingAndGlyphs" >(D:)  DVD Drive</text>
</g>
<rect x="348" y="356" width="3" height="1584" fill="#fff" />
<rect x="126" y="1905" width="222" height="33" fill="#f6f5ef" />
<rect x="128" y="1907" width="30" height="30" rx="3" fill="url(#scrbtn)" stroke="#c6d4f7" stroke-width="2"/>
<rect x="316" y="1907" width="30" height="30" rx="3" fill="url(#scrbtn)" stroke="#c6d4f7" stroke-width="2"/>
<path d="M148,1915 l-8,7 l8,7" stroke="#4d6185" stroke-width="4" fill="none"/><path d="M325,1915 l8,7 l-8,7" stroke="#4d6185" stroke-width="4" fill="none"/>
<rect x="184" y="1907" width="120" height="30" rx="3" fill="url(#scrbtn)" stroke="#c6d4f7" stroke-width="2"/>
<path d="M238,1915 v14 M242,1915 v14 M246,1915 v14 M250,1915 v14" stroke="#eef3ff" stroke-width="2"/>
<rect x="122" y="1941" width="229" height="65" fill="#ece9d8" />
<path d="M123,2004 V1942 H349" stroke="#fff" stroke-width="2" fill="none"/><path d="M123,2004 H349 V1942" stroke="#aca899" stroke-width="2" fill="none"/>
<rect x="122" y="2004" width="230" height="2" fill="#fff" />
<g transform="translate(136,1948)"><path d="M3,4 V45 M3,17 H15 M3,29 H15 M3,41 H15" stroke="#000" stroke-width="2"/><rect x="0" y="2" width="11" height="8" fill="#ffee00" stroke="#000" stroke-width="1.5"/><rect x="16" y="37" width="11" height="8" fill="#ffee00" stroke="#000" stroke-width="1.5"/><path d="M18,32 L40,4" stroke="#000" stroke-width="9"/><path d="M18,32 L40,4" stroke="#e8f0f0" stroke-width="5"/></g>
<g transform="translate(198,1948)"><path d="M3,4 V45 M3,17 H15 M3,29 H15 M3,41 H15" stroke="#000" stroke-width="2"/><rect x="0" y="2" width="11" height="8" fill="#ffee00" stroke="#000" stroke-width="1.5"/><rect x="16" y="14" width="11" height="8" fill="#ffee00" stroke="#000" stroke-width="1.5"/><rect x="16" y="37" width="11" height="8" fill="#ffee00" stroke="#000" stroke-width="1.5"/><path d="M14,16 q2,-12 14,-12 q14,2 12,18 q-2,14 -14,14" stroke="#22bb22" stroke-width="5" fill="none"/></g>
<g transform="translate(256,1948)"><rect x="1" y="14" width="35" height="30" fill="#f4f080" stroke="#000" stroke-width="2"/><rect x="3" y="10" width="17" height="6" fill="#f4f080" stroke="#000" stroke-width="1.5"/><path d="M30,12 L46,-4 M38,8 h10 M34,4 l10,10 M35,4 v-8" stroke="#111" stroke-width="1.5"/></g>
<rect x="355" y="1079" width="14" height="198" fill="#ece9d8" stroke="#808080" stroke-width="2"/>
<path d="M358,1081 v194" stroke="#fff" stroke-width="2"/>
<path d="M360,1096 l6,-5 v10 z M360,1258 l6,-5 v10 z" fill="#000080"/>
<path d="M363,1110 V1245" stroke="#000080" stroke-width="2" stroke-dasharray="2,4"/>
<rect x="372" y="353" width="2734" height="162" fill="url(#listbg)" />
<rect x="372" y="353" width="2734" height="2" fill="#aca899" />
<rect x="372" y="353" width="2" height="162" fill="#aca899" />
<rect x="374" y="355" width="2730" height="2" fill="#716f64" />
<rect x="374" y="355" width="2" height="158" fill="#716f64" />
<rect x="3104" y="355" width="2" height="160" fill="#fff" />
<rect x="372" y="513" width="2734" height="3" fill="#fff" />
<rect x="376" y="357" width="2728" height="30" fill="#ece9d8" />
<rect x="376" y="385" width="2728" height="3" fill="#d0cdbc" />
<rect x="376" y="387" width="2728" height="2" fill="#fff" />
<rect x="735" y="360" width="2" height="25" fill="#c9c6b5" />
<rect x="737" y="360" width="2" height="25" fill="#fff" />
<rect x="971" y="360" width="2" height="25" fill="#c9c6b5" />
<rect x="973" y="360" width="2" height="25" fill="#fff" />
<rect x="1223" y="360" width="2" height="25" fill="#c9c6b5" />
<rect x="1225" y="360" width="2" height="25" fill="#fff" />
<rect x="1301" y="360" width="2" height="25" fill="#c9c6b5" />
<rect x="1303" y="360" width="2" height="25" fill="#fff" />
<rect x="2205" y="360" width="2" height="25" fill="#c9c6b5" />
<rect x="2207" y="360" width="2" height="25" fill="#fff" />
<rect x="2337" y="360" width="2" height="25" fill="#c9c6b5" />
<rect x="2339" y="360" width="2" height="25" fill="#fff" />
<text x="389" y="381.5" font-family='"Liberation Sans", sans-serif' font-size="25" font-weight="normal" fill="#000" text-anchor="start" textLength="37" lengthAdjust="spacingAndGlyphs" >Run</text>
<text x="751.4" y="381.5" font-family='"Liberation Sans", sans-serif' font-size="25" font-weight="normal" fill="#000" text-anchor="start" textLength="40" lengthAdjust="spacingAndGlyphs" >Title</text>
<text x="987.4" y="381.5" font-family='"Liberation Sans", sans-serif' font-size="25" font-weight="normal" fill="#000" text-anchor="start" textLength="46" lengthAdjust="spacingAndGlyphs" >Date</text>
<text x="1240" y="381.5" font-family='"Liberation Sans", sans-serif' font-size="25" font-weight="normal" fill="#000" text-anchor="start" textLength="47" lengthAdjust="spacingAndGlyphs" >Type</text>
<text x="1316.7" y="381.5" font-family='"Liberation Sans", sans-serif' font-size="25" font-weight="normal" fill="#000" text-anchor="start" textLength="82" lengthAdjust="spacingAndGlyphs" >Location</text>
<text x="2221" y="381.5" font-family='"Liberation Sans", sans-serif' font-size="25" font-weight="normal" fill="#000" text-anchor="start" textLength="102" lengthAdjust="spacingAndGlyphs" >Gear Ratio</text>
<rect x="412" y="427" width="1928" height="34" fill="#ece9d8" />
<rect x="381" y="395" width="30" height="30" fill="#000080" stroke="#000" stroke-width="2"/><rect x="396" y="396" width="14" height="28" fill="#8080c0"/>
<rect x="381" y="429" width="30" height="30" fill="#ff0000" stroke="#000" stroke-width="2"/><rect x="396" y="430" width="14" height="28" fill="#ff8080"/>
<text x="417" y="419.5" font-family='"Liberation Sans", sans-serif' font-size="25" font-weight="normal" fill="#000" text-anchor="start" textLength="308.7" lengthAdjust="spacingAndGlyphs" >EdMay_Blue1999_10AE_069.drf</text>
<text x="751.4" y="419.5" font-family='"Liberation Sans", sans-serif' font-size="25" font-weight="normal" fill="#000" text-anchor="start" textLength="214.6" lengthAdjust="spacingAndGlyphs" >MS3x Tuning 06-26-16</text>
<text x="987.4" y="419.5" font-family='"Liberation Sans", sans-serif' font-size="25" font-weight="normal" fill="#000" text-anchor="start" textLength="217.4" lengthAdjust="spacingAndGlyphs" >6/27/2016 4:48:00 PM</text>
<text x="1240" y="419.5" font-family='"Liberation Sans", sans-serif' font-size="25" font-weight="normal" fill="#000" text-anchor="start" textLength="28.5" lengthAdjust="spacingAndGlyphs" >RO</text>
<text x="1316.7" y="419.5" font-family='"Liberation Sans", sans-serif' font-size="25" font-weight="normal" fill="#000" text-anchor="start" textLength="883.3" lengthAdjust="spacingAndGlyphs" >C:\Documents and Settings\Owner\Desktop\turbofan-dyno\EdMay_Blue1999_10AE_069.drf</text>
<text x="2221" y="419.5" font-family='"Liberation Sans", sans-serif' font-size="25" font-weight="normal" fill="#000" text-anchor="start" textLength="51" lengthAdjust="spacingAndGlyphs" >56.11</text>
<text x="417" y="453.5" font-family='"Liberation Sans", sans-serif' font-size="25" font-weight="normal" fill="#000" text-anchor="start" textLength="149" lengthAdjust="spacingAndGlyphs" >RunFile_043.drf</text>
<text x="987.4" y="453.5" font-family='"Liberation Sans", sans-serif' font-size="25" font-weight="normal" fill="#000" text-anchor="start" textLength="215" lengthAdjust="spacingAndGlyphs" >10/22/2015 4:50:32 ...</text>
<text x="1240" y="453.5" font-family='"Liberation Sans", sans-serif' font-size="25" font-weight="normal" fill="#000" text-anchor="start" textLength="28.5" lengthAdjust="spacingAndGlyphs" >RO</text>
<text x="1316.7" y="453.5" font-family='"Liberation Sans", sans-serif' font-size="25" font-weight="normal" fill="#000" text-anchor="start" textLength="815" lengthAdjust="spacingAndGlyphs" >C:\Documents and Settings\Owner\Desktop\Ian-synergy-10.22.2015\RunFile_043.drf</text>
<text x="2221" y="453.5" font-family='"Liberation Sans", sans-serif' font-size="25" font-weight="normal" fill="#000" text-anchor="start" textLength="53" lengthAdjust="spacingAndGlyphs" >55.78</text>
<rect x="1639" y="519" width="198" height="14" fill="#ece9d8" stroke="#808080" stroke-width="2"/><path d="M1641,522 h194" stroke="#fff" stroke-width="2"/>
<path d="M1652,529 l5,-6 l5,6 z M1814,529 l5,-6 l5,6 z" fill="#000080"/>
<path d="M1671,527 H1806" stroke="#000080" stroke-width="2" stroke-dasharray="2,4"/>
<rect x="114" y="2018" width="3000" height="2" fill="#aca899" />
<rect x="114" y="2020" width="2" height="33" fill="#aca899" />
<rect x="2812" y="2020" width="2" height="33" fill="#aca899" />
<rect x="2817" y="2020" width="2" height="33" fill="#aca899" />
<text x="2834" y="2043.7" font-family='"Liberation Sans", sans-serif' font-size="23.5" font-weight="normal" fill="#000" text-anchor="start" textLength="158" lengthAdjust="spacingAndGlyphs" >Auto Scale Mode</text>
<rect x="372" y="536" width="2734" height="1470" fill="url(#chartbg)" />
<rect x="372" y="536" width="2731" height="4" fill="#aca899" />
<rect x="372" y="536" width="4" height="1467" fill="#aca899" />
<rect x="3102" y="538" width="4" height="1468" fill="#fff" />
<rect x="372" y="2002" width="2734" height="4" fill="#fff" />
<text x="1613" y="564" font-family='"Liberation Mono", monospace' font-size="24" font-weight="bold" fill="#000" text-anchor="start" textLength="253" lengthAdjust="spacingAndGlyphs"  stroke="#000" stroke-width="0.6">DYNOJET RESEARCH</text>
<text x="2804" y="564" font-family='"Liberation Mono", monospace' font-size="24" font-weight="bold" fill="#000" text-anchor="start" textLength="280" lengthAdjust="spacingAndGlyphs"  stroke="#000" stroke-width="0.6">CF: SAE  Smoothing: 5</text>
<rect x="502" y="600" width="2490" height="1125" rx="9" ry="9" fill="#aca899"/>
<rect x="493" y="591" width="2490" height="1125" rx="8" ry="8" fill="#fff" stroke="#000" stroke-width="2.2"/>
<rect x="502" y="1747" width="2490" height="169" rx="9" ry="9" fill="#aca899"/>
<rect x="493" y="1738" width="2490" height="169" rx="8" ry="8" fill="#fff" stroke="#000" stroke-width="2.2"/>
<line x1="684.6" y1="598" x2="684.6" y2="1714" stroke="#000" stroke-width="2" stroke-dasharray="6,4"/>
<line x1="684.6" y1="1744" x2="684.6" y2="1905" stroke="#000" stroke-width="2" stroke-dasharray="6,4"/>
<line x1="876.2" y1="598" x2="876.2" y2="1714" stroke="#000" stroke-width="2" stroke-dasharray="6,4"/>
<line x1="876.2" y1="1744" x2="876.2" y2="1905" stroke="#000" stroke-width="2" stroke-dasharray="6,4"/>
<line x1="1067.8" y1="598" x2="1067.8" y2="1714" stroke="#000" stroke-width="2" stroke-dasharray="6,4"/>
<line x1="1067.8" y1="1744" x2="1067.8" y2="1905" stroke="#000" stroke-width="2" stroke-dasharray="6,4"/>
<line x1="1259.4" y1="598" x2="1259.4" y2="1714" stroke="#000" stroke-width="2" stroke-dasharray="6,4"/>
<line x1="1259.4" y1="1744" x2="1259.4" y2="1905" stroke="#000" stroke-width="2" stroke-dasharray="6,4"/>
<line x1="1451.0" y1="598" x2="1451.0" y2="1714" stroke="#000" stroke-width="2" stroke-dasharray="6,4"/>
<line x1="1451.0" y1="1744" x2="1451.0" y2="1905" stroke="#000" stroke-width="2" stroke-dasharray="6,4"/>
<line x1="1642.6" y1="598" x2="1642.6" y2="1714" stroke="#000" stroke-width="2" stroke-dasharray="6,4"/>
<line x1="1642.6" y1="1744" x2="1642.6" y2="1905" stroke="#000" stroke-width="2" stroke-dasharray="6,4"/>
<line x1="1834.2" y1="598" x2="1834.2" y2="1714" stroke="#000" stroke-width="2" stroke-dasharray="6,4"/>
<line x1="1834.2" y1="1744" x2="1834.2" y2="1905" stroke="#000" stroke-width="2" stroke-dasharray="6,4"/>
<line x1="2025.8" y1="598" x2="2025.8" y2="1714" stroke="#000" stroke-width="2" stroke-dasharray="6,4"/>
<line x1="2025.8" y1="1744" x2="2025.8" y2="1905" stroke="#000" stroke-width="2" stroke-dasharray="6,4"/>
<line x1="2217.4" y1="598" x2="2217.4" y2="1714" stroke="#000" stroke-width="2" stroke-dasharray="6,4"/>
<line x1="2217.4" y1="1744" x2="2217.4" y2="1905" stroke="#000" stroke-width="2" stroke-dasharray="6,4"/>
<line x1="2409.0" y1="598" x2="2409.0" y2="1714" stroke="#000" stroke-width="2" stroke-dasharray="6,4"/>
<line x1="2409.0" y1="1744" x2="2409.0" y2="1905" stroke="#000" stroke-width="2" stroke-dasharray="6,4"/>
<line x1="2600.6" y1="598" x2="2600.6" y2="1714" stroke="#000" stroke-width="2" stroke-dasharray="6,4"/>
<line x1="2600.6" y1="1744" x2="2600.6" y2="1905" stroke="#000" stroke-width="2" stroke-dasharray="6,4"/>
<line x1="2792.2" y1="598" x2="2792.2" y2="1714" stroke="#000" stroke-width="2" stroke-dasharray="6,4"/>
<line x1="2792.2" y1="1744" x2="2792.2" y2="1905" stroke="#000" stroke-width="2" stroke-dasharray="6,4"/>
<line x1="500" y1="1555.8" x2="2981" y2="1555.8" stroke="#000" stroke-width="2" stroke-dasharray="6,4"/>
<line x1="500" y1="1394.9" x2="2981" y2="1394.9" stroke="#000" stroke-width="2" stroke-dasharray="6,4"/>
<line x1="500" y1="1234.0" x2="2981" y2="1234.0" stroke="#000" stroke-width="2" stroke-dasharray="6,4"/>
<line x1="500" y1="1073.0" x2="2981" y2="1073.0" stroke="#000" stroke-width="2" stroke-dasharray="6,4"/>
<line x1="500" y1="912.0" x2="2981" y2="912.0" stroke="#000" stroke-width="2" stroke-dasharray="6,4"/>
<line x1="500" y1="751.1" x2="2981" y2="751.1" stroke="#000" stroke-width="2" stroke-dasharray="6,4"/>
<line x1="500" y1="1866.8" x2="2981" y2="1866.8" stroke="#000" stroke-width="2" stroke-dasharray="6,4"/>
<line x1="500" y1="1823.7" x2="2981" y2="1823.7" stroke="#000" stroke-width="2" stroke-dasharray="6,4"/>
<line x1="500" y1="1780.5" x2="2981" y2="1780.5" stroke="#000" stroke-width="2" stroke-dasharray="6,4"/>
<path d="M486,1684.6 H493 M2983,1684.6 H2990 M486,1652.4 H493 M2983,1652.4 H2990 M486,1620.2 H493 M2983,1620.2 H2990 M486,1588.0 H493 M2983,1588.0 H2990 M486,1555.8 H493 M2983,1555.8 H2990 M486,1523.7 H493 M2983,1523.7 H2990 M486,1491.5 H493 M2983,1491.5 H2990 M486,1459.3 H493 M2983,1459.3 H2990 M486,1427.1 H493 M2983,1427.1 H2990 M486,1394.9 H493 M2983,1394.9 H2990 M486,1362.7 H493 M2983,1362.7 H2990 M486,1330.5 H493 M2983,1330.5 H2990 M486,1298.3 H493 M2983,1298.3 H2990 M486,1266.1 H493 M2983,1266.1 H2990 M486,1234.0 H493 M2983,1234.0 H2990 M486,1201.8 H493 M2983,1201.8 H2990 M486,1169.6 H493 M2983,1169.6 H2990 M486,1137.4 H493 M2983,1137.4 H2990 M486,1105.2 H493 M2983,1105.2 H2990 M486,1073.0 H493 M2983,1073.0 H2990 M486,1040.8 H493 M2983,1040.8 H2990 M486,1008.6 H493 M2983,1008.6 H2990 M486,976.4 H493 M2983,976.4 H2990 M486,944.2 H493 M2983,944.2 H2990 M486,912.0 H493 M2983,912.0 H2990 M486,879.9 H493 M2983,879.9 H2990 M486,847.7 H493 M2983,847.7 H2990 M486,815.5 H493 M2983,815.5 H2990 M486,783.3 H493 M2983,783.3 H2990 M486,751.1 H493 M2983,751.1 H2990 M486,718.9 H493 M2983,718.9 H2990 M486,686.7 H493 M2983,686.7 H2990 M486,654.5 H493 M2983,654.5 H2990 M486,622.3 H493 M2983,622.3 H2990 M486,1888.4 H493 M486,1877.6 H493 M486,1866.8 H493 M486,1856.1 H493 M486,1845.3 H493 M486,1834.5 H493 M486,1823.7 H493 M486,1812.9 H493 M486,1802.1 H493 M486,1791.3 H493 M486,1780.5 H493 M486,1769.8 H493 M486,1759.0 H493 M2983,1898.5 H2990 M2983,1887.0 H2990 M2983,1875.5 H2990 M2983,1864.0 H2990 M2983,1852.5 H2990 M2983,1841.0 H2990 M2983,1829.5 H2990 M2983,1817.9 H2990 M2983,1806.4 H2990 M2983,1794.9 H2990 M2983,1783.4 H2990 M2983,1771.9 H2990 M2983,1760.4 H2990 M531.3,1907 V1914 M569.6,1907 V1914 M608.0,1907 V1914 M646.3,1907 V1914 M684.6,1907 V1914 M722.9,1907 V1914 M761.2,1907 V1914 M799.6,1907 V1914 M837.9,1907 V1914 M876.2,1907 V1914 M914.5,1907 V1914 M952.8,1907 V1914 M991.2,1907 V1914 M1029.5,1907 V1914 M1067.8,1907 V1914 M1106.1,1907 V1914 M1144.4,1907 V1914 M1182.8,1907 V1914 M1221.1,1907 V1914 M1259.4,1907 V1914 M1297.7,1907 V1914 M1336.0,1907 V1914 M1374.4,1907 V1914 M1412.7,1907 V1914 M1451.0,1907 V1914 M1489.3,1907 V1914 M1527.6,1907 V1914 M1566.0,1907 V1914 M1604.3,1907 V1914 M1642.6,1907 V1914 M1680.9,1907 V1914 M1719.2,1907 V1914 M1757.6,1907 V1914 M1795.9,1907 V1914 M1834.2,1907 V1914 M1872.5,1907 V1914 M1910.8,1907 V1914 M1949.2,1907 V1914 M1987.5,1907 V1914 M2025.8,1907 V1914 M2064.1,1907 V1914 M2102.4,1907 V1914 M2140.8,1907 V1914 M2179.1,1907 V1914 M2217.4,1907 V1914 M2255.7,1907 V1914 M2294.0,1907 V1914 M2332.4,1907 V1914 M2370.7,1907 V1914 M2409.0,1907 V1914 M2447.3,1907 V1914 M2485.6,1907 V1914 M2524.0,1907 V1914 M2562.3,1907 V1914 M2600.6,1907 V1914 M2638.9,1907 V1914 M2677.2,1907 V1914 M2715.6,1907 V1914 M2753.9,1907 V1914 M2792.2,1907 V1914 M2830.5,1907 V1914 M2868.8,1907 V1914 M2907.2,1907 V1914 M2945.5,1907 V1914" stroke="#000" stroke-width="2"/>
<text x="482" y="1726.3" font-family='"Liberation Mono", monospace' font-size="24" font-weight="bold" fill="#000" text-anchor="end" textLength="13" lengthAdjust="spacingAndGlyphs"  stroke="#000" stroke-width="0.6">0</text>
<text x="2998" y="1726.3" font-family='"Liberation Mono", monospace' font-size="24" font-weight="bold" fill="#000" text-anchor="start" textLength="13" lengthAdjust="spacingAndGlyphs"  stroke="#000" stroke-width="0.6">0</text>
<text x="482" y="1565.35" font-family='"Liberation Mono", monospace' font-size="24" font-weight="bold" fill="#000" text-anchor="end" textLength="30" lengthAdjust="spacingAndGlyphs"  stroke="#000" stroke-width="0.6">50</text>
<text x="2998" y="1565.35" font-family='"Liberation Mono", monospace' font-size="24" font-weight="bold" fill="#000" text-anchor="start" textLength="30" lengthAdjust="spacingAndGlyphs"  stroke="#000" stroke-width="0.6">50</text>
<text x="482" y="1404.4" font-family='"Liberation Mono", monospace' font-size="24" font-weight="bold" fill="#000" text-anchor="end" textLength="45" lengthAdjust="spacingAndGlyphs"  stroke="#000" stroke-width="0.6">100</text>
<text x="2998" y="1404.4" font-family='"Liberation Mono", monospace' font-size="24" font-weight="bold" fill="#000" text-anchor="start" textLength="45" lengthAdjust="spacingAndGlyphs"  stroke="#000" stroke-width="0.6">100</text>
<text x="482" y="1243.45" font-family='"Liberation Mono", monospace' font-size="24" font-weight="bold" fill="#000" text-anchor="end" textLength="45" lengthAdjust="spacingAndGlyphs"  stroke="#000" stroke-width="0.6">150</text>
<text x="2998" y="1243.45" font-family='"Liberation Mono", monospace' font-size="24" font-weight="bold" fill="#000" text-anchor="start" textLength="45" lengthAdjust="spacingAndGlyphs"  stroke="#000" stroke-width="0.6">150</text>
<text x="482" y="1082.5" font-family='"Liberation Mono", monospace' font-size="24" font-weight="bold" fill="#000" text-anchor="end" textLength="45" lengthAdjust="spacingAndGlyphs"  stroke="#000" stroke-width="0.6">200</text>
<text x="2998" y="1082.5" font-family='"Liberation Mono", monospace' font-size="24" font-weight="bold" fill="#000" text-anchor="start" textLength="45" lengthAdjust="spacingAndGlyphs"  stroke="#000" stroke-width="0.6">200</text>
<text x="482" y="921.55" font-family='"Liberation Mono", monospace' font-size="24" font-weight="bold" fill="#000" text-anchor="end" textLength="45" lengthAdjust="spacingAndGlyphs"  stroke="#000" stroke-width="0.6">250</text>
<text x="2998" y="921.55" font-family='"Liberation Mono", monospace' font-size="24" font-weight="bold" fill="#000" text-anchor="start" textLength="45" lengthAdjust="spacingAndGlyphs"  stroke="#000" stroke-width="0.6">250</text>
<text x="482" y="760.6" font-family='"Liberation Mono", monospace' font-size="24" font-weight="bold" fill="#000" text-anchor="end" textLength="45" lengthAdjust="spacingAndGlyphs"  stroke="#000" stroke-width="0.6">300</text>
<text x="2998" y="760.6" font-family='"Liberation Mono", monospace' font-size="24" font-weight="bold" fill="#000" text-anchor="start" textLength="45" lengthAdjust="spacingAndGlyphs"  stroke="#000" stroke-width="0.6">300</text>
<text x="482" y="599.6500000000001" font-family='"Liberation Mono", monospace' font-size="24" font-weight="bold" fill="#000" text-anchor="end" textLength="45" lengthAdjust="spacingAndGlyphs"  stroke="#000" stroke-width="0.6">350</text>
<text x="2998" y="599.6500000000001" font-family='"Liberation Mono", monospace' font-size="24" font-weight="bold" fill="#000" text-anchor="start" textLength="45" lengthAdjust="spacingAndGlyphs"  stroke="#000" stroke-width="0.6">350</text>
<text x="482" y="1919.0" font-family='"Liberation Mono", monospace' font-size="24" font-weight="bold" fill="#000" text-anchor="end" textLength="27" lengthAdjust="spacingAndGlyphs"  stroke="#000" stroke-width="0.6">10</text>
<text x="482" y="1875.85" font-family='"Liberation Mono", monospace' font-size="24" font-weight="bold" fill="#000" text-anchor="end" textLength="27" lengthAdjust="spacingAndGlyphs"  stroke="#000" stroke-width="0.6">12</text>
<text x="482" y="1832.7" font-family='"Liberation Mono", monospace' font-size="24" font-weight="bold" fill="#000" text-anchor="end" textLength="27" lengthAdjust="spacingAndGlyphs"  stroke="#000" stroke-width="0.6">14</text>
<text x="482" y="1789.55" font-family='"Liberation Mono", monospace' font-size="24" font-weight="bold" fill="#000" text-anchor="end" textLength="27" lengthAdjust="spacingAndGlyphs"  stroke="#000" stroke-width="0.6">16</text>
<text x="482" y="1746.4" font-family='"Liberation Mono", monospace' font-size="24" font-weight="bold" fill="#000" text-anchor="end" textLength="27" lengthAdjust="spacingAndGlyphs"  stroke="#000" stroke-width="0.6">18</text>
<text x="2998" y="1919.0" font-family='"Liberation Mono", monospace' font-size="24" font-weight="bold" fill="#000" text-anchor="start" textLength="12" lengthAdjust="spacingAndGlyphs"  stroke="#000" stroke-width="0.6">0</text>
<text x="2998" y="1861.4666666666667" font-family='"Liberation Mono", monospace' font-size="24" font-weight="bold" fill="#000" text-anchor="start" textLength="45" lengthAdjust="spacingAndGlyphs"  stroke="#000" stroke-width="0.6">100</text>
<text x="2998" y="1803.9333333333334" font-family='"Liberation Mono", monospace' font-size="24" font-weight="bold" fill="#000" text-anchor="start" textLength="45" lengthAdjust="spacingAndGlyphs"  stroke="#000" stroke-width="0.6">200</text>
<text x="2998" y="1746.4" font-family='"Liberation Mono", monospace' font-size="24" font-weight="bold" fill="#000" text-anchor="start" textLength="45" lengthAdjust="spacingAndGlyphs"  stroke="#000" stroke-width="0.6">300</text>
<text x="493.0" y="1940" font-family='"Liberation Mono", monospace' font-size="24" font-weight="bold" fill="#000" text-anchor="middle" textLength="36" lengthAdjust="spacingAndGlyphs"  stroke="#000" stroke-width="0.6">1.0</text>
<text x="684.6" y="1940" font-family='"Liberation Mono", monospace' font-size="24" font-weight="bold" fill="#000" text-anchor="middle" textLength="36" lengthAdjust="spacingAndGlyphs"  stroke="#000" stroke-width="0.6">1.5</text>
<text x="876.2" y="1940" font-family='"Liberation Mono", monospace' font-size="24" font-weight="bold" fill="#000" text-anchor="middle" textLength="36" lengthAdjust="spacingAndGlyphs"  stroke="#000" stroke-width="0.6">2.0</text>
<text x="1067.8" y="1940" font-family='"Liberation Mono", monospace' font-size="24" font-weight="bold" fill="#000" text-anchor="middle" textLength="36" lengthAdjust="spacingAndGlyphs"  stroke="#000" stroke-width="0.6">2.5</text>
<text x="1259.4" y="1940" font-family='"Liberation Mono", monospace' font-size="24" font-weight="bold" fill="#000" text-anchor="middle" textLength="36" lengthAdjust="spacingAndGlyphs"  stroke="#000" stroke-width="0.6">3.0</text>
<text x="1451.0" y="1940" font-family='"Liberation Mono", monospace' font-size="24" font-weight="bold" fill="#000" text-anchor="middle" textLength="36" lengthAdjust="spacingAndGlyphs"  stroke="#000" stroke-width="0.6">3.5</text>
<text x="1642.6" y="1940" font-family='"Liberation Mono", monospace' font-size="24" font-weight="bold" fill="#000" text-anchor="middle" textLength="36" lengthAdjust="spacingAndGlyphs"  stroke="#000" stroke-width="0.6">4.0</text>
<text x="1834.2" y="1940" font-family='"Liberation Mono", monospace' font-size="24" font-weight="bold" fill="#000" text-anchor="middle" textLength="36" lengthAdjust="spacingAndGlyphs"  stroke="#000" stroke-width="0.6">4.5</text>
<text x="2025.8" y="1940" font-family='"Liberation Mono", monospace' font-size="24" font-weight="bold" fill="#000" text-anchor="middle" textLength="36" lengthAdjust="spacingAndGlyphs"  stroke="#000" stroke-width="0.6">5.0</text>
<text x="2217.3999999999996" y="1940" font-family='"Liberation Mono", monospace' font-size="24" font-weight="bold" fill="#000" text-anchor="middle" textLength="36" lengthAdjust="spacingAndGlyphs"  stroke="#000" stroke-width="0.6">5.5</text>
<text x="2409.0" y="1940" font-family='"Liberation Mono", monospace' font-size="24" font-weight="bold" fill="#000" text-anchor="middle" textLength="36" lengthAdjust="spacingAndGlyphs"  stroke="#000" stroke-width="0.6">6.0</text>
<text x="2600.6" y="1940" font-family='"Liberation Mono", monospace' font-size="24" font-weight="bold" fill="#000" text-anchor="middle" textLength="36" lengthAdjust="spacingAndGlyphs"  stroke="#000" stroke-width="0.6">6.5</text>
<text x="2792.2" y="1940" font-family='"Liberation Mono", monospace' font-size="24" font-weight="bold" fill="#000" text-anchor="middle" textLength="36" lengthAdjust="spacingAndGlyphs"  stroke="#000" stroke-width="0.6">7.0</text>
<text x="2983.7999999999997" y="1940" font-family='"Liberation Mono", monospace' font-size="24" font-weight="bold" fill="#000" text-anchor="middle" textLength="36" lengthAdjust="spacingAndGlyphs"  stroke="#000" stroke-width="0.6">7.5</text>
<text x="1555" y="1983.5" font-family='"Liberation Mono", monospace' font-size="24" font-weight="bold" fill="#000" text-anchor="start" textLength="366" lengthAdjust="spacingAndGlyphs"  stroke="#000" stroke-width="0.6">Engine Speed (RPM x1000)</text>
<text transform="translate(418,1232) rotate(-90)" x="0" y="0" font-family='"Liberation Mono", monospace' font-size="24" font-weight="bold" stroke="#000" stroke-width="0.6" textLength="160" lengthAdjust="spacingAndGlyphs">Power (hp)</text>
<text transform="translate(419,1875) rotate(-90)" x="0" y="0" font-family='"Liberation Mono", monospace' font-size="24" font-weight="bold" stroke="#000" stroke-width="0.6" textLength="113" lengthAdjust="spacingAndGlyphs">Air/Fuel</text>
<text transform="translate(3058,1048) rotate(90)" x="0" y="0" font-family='"Liberation Mono", monospace' font-size="24" font-weight="bold" stroke="#000" stroke-width="0.6" textLength="210" lengthAdjust="spacingAndGlyphs">Torque (ft-lbs)</text>
<text transform="translate(3057,1745) rotate(90)" x="0" y="0" font-family='"Liberation Mono", monospace' font-size="24" font-weight="bold" stroke="#000" stroke-width="0.6" textLength="161" lengthAdjust="spacingAndGlyphs">*Manifold P</text>
<g clip-path="url(#clipU)">
<polyline points="680.3,1448.6 685.0,1453.0 693.3,1462.4 711.5,1507.9 728.4,1546.9 742.7,1609.3 746.5,1614.5 757.0,1621.0 764.7,1619.6 768.6,1588.5 775.1,1544.3 788.1,1507.9 796.0,1466.3 802.4,1427.3 811.5,1396.2 822.0,1383.0 848.0,1368.9 877.0,1360.3 912.9,1350.7 944.0,1342.9 977.8,1331.2 1029.8,1318.2 1069.0,1302.4 1110.8,1283.1 1149.4,1257.4 1200.9,1231.7 1220.2,1223.6 1265.2,1209.1 1297.4,1195.6 1361.7,1175.4 1426.1,1157.7 1450.9,1149.6 1496.9,1125.5 1540.0,1096.2 1572.2,1068.9 1610.8,1023.8 1643.0,978.8 1681.6,914.4 1700.9,882.3 1723.4,840.4 1745.9,817.9 1768.4,800.2 1781.3,801.2 1813.5,816.3 1839.2,819.5 1877.8,811.5 1935.8,810.8 1958.3,829.2 1996.9,827.6 2025.8,824.3 2048.4,835.6 2069.4,834.0 2094.4,827.2 2130.6,836.3 2153.2,837.4 2185.0,854.4 2218.9,844.9 2232.5,847.6 2255.2,858.9 2289.1,861.2 2311.8,868.0 2359.4,869.1 2393.3,885.0 2420.5,882.7 2434.1,887.2 2450.0,905.4 2465.8,908.8 2483.9,903.1 2504.3,913.3 2522.4,925.7 2538.3,924.6 2575.4,947.4 2597.2,947.4 2619.0,963.7 2648.9,966.4 2665.3,982.8 2692.5,985.5 2725.2,1003.2 2747.0,1025.0 2766.0,1025.0 2782.4,1042.7 2802.8,1042.7 2821.9,1065.8" fill="none" stroke="#7272b8" stroke-width="2.0" stroke-linejoin="round" stroke-linecap="square" />
<polyline points="680.3,1640.4 689.4,1641.0 728.4,1665.1 741.4,1680.7 749.1,1684.6 764.7,1684.6 772.5,1662.5 790.7,1643.0 798.5,1624.8 808.9,1606.7 822.0,1598.9 855.7,1584.6 877.0,1579.4 938.9,1562.5 983.0,1545.6 1037.6,1531.3 1068.8,1518.3 1136.5,1482.6 1213.7,1445.6 1258.8,1426.3 1313.5,1402.2 1368.2,1374.8 1450.9,1337.8 1496.9,1308.9 1529.1,1283.1 1560.0,1257.4 1578.6,1233.0 1610.8,1200.8 1643.0,1155.8 1668.7,1110.7 1688.0,1068.9 1707.3,1043.1 1723.4,1014.2 1742.7,988.4 1762.0,967.5 1781.3,954.7 1810.3,954.7 1845.7,945.0 1877.8,920.9 1919.7,898.4 1942.2,896.7 1961.5,901.6 1990.5,887.1 2016.2,871.0 2038.7,867.8 2060.4,864.6 2096.6,839.7 2141.9,827.2 2157.8,825.0 2185.0,826.8 2207.6,813.6 2221.2,801.2 2232.5,798.9 2248.4,804.6 2277.8,789.9 2307.3,791.0 2327.6,779.7 2352.6,771.7 2363.9,769.5 2384.3,774.0 2397.9,771.7 2416.0,760.4 2429.6,760.4 2445.4,771.7 2454.5,775.1 2477.1,759.3 2488.5,757.0 2506.6,767.2 2520.2,768.8 2545.1,759.3 2559.1,763.5 2572.7,771.7 2594.5,767.1 2616.3,778.5 2643.5,772.5 2665.3,784.8 2692.5,778.5 2708.8,782.0 2725.2,790.8 2747.0,808.5 2760.6,805.2 2768.8,807.1 2782.4,820.7 2790.5,820.2 2801.4,815.3 2820.5,838.4" fill="none" stroke="#000080" stroke-width="2.0" stroke-linejoin="round" stroke-linecap="square" />
<polyline points="728.4,1394.9 762.1,1378.0 795.9,1366.3 827.1,1352.0 853.1,1345.5 886.9,1344.2 899.9,1346.3 938.9,1341.1 959.6,1331.2 998.6,1319.5 1029.8,1310.4 1069.0,1286.4 1104.4,1275.1 1136.5,1259.0 1159.0,1255.8 1200.9,1236.5 1258.8,1214.0 1284.5,1207.5 1303.8,1196.3 1361.7,1173.7 1393.9,1149.6 1426.1,1120.7 1450.9,1102.3 1471.1,1070.8 1496.9,1032.2 1519.4,1000.0 1540.0,962.7 1572.2,937.0 1610.8,901.6 1636.5,896.7 1668.7,890.3 1694.4,877.4 1733.0,869.4 1758.8,863.0 1778.1,850.1 1803.8,853.3 1839.2,835.6 1881.0,835.6 1903.6,827.6 1922.9,833.4 1958.3,832.4 1977.6,829.2 1990.5,838.8 2009.8,837.2 2029.0,826.0 2051.3,830.6 2078.5,830.6 2089.8,827.2 2105.7,837.4 2148.7,835.1 2166.8,852.1 2178.2,869.1 2194.0,869.1 2205.3,862.3 2230.3,861.2 2248.4,854.4 2266.5,856.7 2318.6,861.2 2334.4,868.0 2352.6,870.3 2375.2,888.4 2402.4,889.5 2425.0,895.2 2445.4,890.6 2459.0,901.5 2472.6,900.8 2489.6,890.6 2508.9,909.9 2531.5,914.4 2556.3,933.7 2575.4,935.1 2602.6,939.2 2619.0,945.4 2648.9,947.4 2670.7,946.0 2692.5,950.1 2717.0,955.5 2736.1,954.2 2747.0,958.2 2757.9,952.8 2766.0,952.8 2779.6,981.4 2790.5,1044.0 2798.7,1084.9 2805.5,1125.7" fill="none" stroke="#ff8080" stroke-width="4.2" stroke-linejoin="round" stroke-linecap="square" />
<polyline points="728.4,1616.5 770.0,1602.8 821.9,1585.9 877.0,1572.9 938.9,1561.2 1003.8,1536.5 1069.0,1510.0 1136.5,1481.0 1200.9,1456.9 1258.8,1427.9 1284.5,1418.3 1329.6,1395.8 1368.2,1376.4 1381.0,1363.6 1426.1,1328.2 1450.9,1307.3 1467.9,1283.1 1500.1,1244.5 1532.3,1189.8 1572.2,1144.5 1610.8,1105.9 1643.0,1093.0 1675.1,1072.1 1700.9,1051.2 1742.7,1028.7 1778.1,998.1 1803.8,990.0 1829.6,965.9 1852.1,953.0 1881.0,943.4 1906.8,922.5 1939.0,917.7 1964.7,898.4 1984.0,893.5 2003.3,895.1 2019.4,874.2 2038.7,863.0 2062.6,860.1 2092.1,842.0 2108.0,843.1 2135.1,826.1 2151.0,822.7 2164.6,831.8 2175.9,843.1 2187.2,843.1 2198.5,830.6 2218.9,822.7 2243.8,802.3 2266.5,796.6 2284.6,787.6 2311.8,779.7 2325.4,776.3 2352.6,775.1 2368.4,781.9 2379.7,784.2 2393.3,777.4 2420.5,775.1 2443.2,758.1 2456.7,763.8 2470.3,762.7 2489.6,738.4 2504.3,753.6 2515.6,755.9 2531.5,752.0 2550.9,763.5 2561.8,763.5 2580.8,758.1 2601.3,754.0 2629.9,753.2 2648.9,745.8 2670.7,736.3 2692.5,732.2 2708.8,728.1 2722.5,729.5 2736.1,722.1 2755.1,721.3 2759.2,710.4 2766.0,709.6 2776.9,739.0 2785.1,779.9 2793.3,820.7 2800.1,864.3 2805.5,924.2" fill="none" stroke="#ff0000" stroke-width="4.2" stroke-linejoin="round" stroke-linecap="square" />
</g>
<g clip-path="url(#clipL)">
<polyline points="676.3,1854.8 693.6,1858.0 718.7,1864.2 740.6,1873.7 761.0,1873.7 775.1,1862.7 793.9,1849.2 819.0,1847.0 847.2,1844.8 910.0,1844.8 968.0,1840.7 1022.8,1838.5 1080.0,1837.6 1174.0,1833.5 1259.0,1829.8 1362.2,1825.0 1440.6,1821.0 1519.0,1816.6 1581.7,1808.7 1642.9,1796.8 1691.5,1785.9 1776.1,1781.1 1858.4,1780.5 1861.5,1782.7 1905.4,1784.9 1936.8,1786.8 1961.9,1784.9 1996.4,1782.7 2056.0,1784.3 2338.2,1784.3 2341.3,1786.5 2388.3,1786.5 2391.5,1784.3 2432.2,1784.9 2457.3,1788.4 2574.8,1788.3 2577.6,1786.3 2605.4,1786.3 2606.8,1788.3 2775.5,1788.3 2776.9,1790.5 2803.3,1791.1 2814.5,1793.9 2821.5,1794.7" fill="none" stroke="#7272b8" stroke-width="2.0" stroke-linejoin="round" stroke-linecap="square" />
<line x1="494" y1="1842.9" x2="2980" y2="1842.9" stroke="#ff0000" stroke-width="2" stroke-dasharray="18,12,6,12" stroke-dashoffset="0.1"/>
<polyline points="681.0,1840.7 692.0,1834.5 703.0,1837.6 715.5,1845.4 725.0,1848.6 737.5,1845.4 753.2,1823.5 772.0,1804.7 787.6,1790.6 800.2,1803.1 812.7,1812.5 825.3,1814.1 837.8,1821.9 853.5,1834.5 878.6,1840.7 913.1,1851.7 944.4,1858.0 975.8,1864.2 1022.8,1868.0 1063.6,1872.7 1080.0,1872.7 1142.7,1869.0 1211.7,1865.8 1299.5,1863.6 1352.8,1869.0 1424.9,1871.1 1487.7,1875.2 1528.4,1878.4 1581.7,1879.9 1619.4,1886.8 1642.9,1886.2 1675.8,1880.5 1722.8,1873.7 1754.2,1869.0 1927.4,1869.0 1930.5,1871.1 1965.0,1872.1 2018.3,1873.7 2046.5,1871.1 2128.1,1871.1 2131.2,1873.7 2219.0,1873.0 2250.4,1869.0 2382.1,1868.0 2385.2,1866.8 2479.3,1866.8 2482.4,1869.0 2544.1,1869.1 2546.9,1866.9 2613.8,1866.9 2616.6,1869.1 2750.4,1869.1 2753.2,1871.1 2792.2,1871.1 2795.0,1872.8 2821.5,1872.8" fill="none" stroke="#000080" stroke-width="2.0" stroke-linejoin="round" stroke-linecap="square" />
<polyline points="718.7,1826.0 737.5,1827.2 793.9,1827.2 819.0,1825.0 875.4,1826.6 888.0,1829.1 919.3,1830.4 938.2,1833.5 953.8,1831.3 969.5,1834.5 1022.8,1834.5 1044.8,1837.6 1054.2,1840.7 1080.0,1840.7 1108.2,1843.9 1133.3,1847.9 1211.7,1851.1 1243.1,1855.5 1293.2,1856.4 1324.6,1862.7 1356.0,1867.4 1393.6,1869.9 1456.3,1872.1 1487.7,1871.1 1519.0,1867.4 1550.4,1873.7 1613.1,1878.4 1669.5,1887.8 1691.5,1890.0 1738.5,1887.8 1800.0,1886.2 1833.3,1884.6 1858.4,1880.5 1921.1,1878.4 1968.1,1873.0 1983.8,1872.1 1999.5,1872.1 2024.6,1876.8 2099.8,1878.4 2134.3,1882.4 2156.3,1889.3 2168.8,1891.8 2206.5,1891.8 2234.7,1887.8 2269.2,1882.4 2281.7,1883.7 2319.3,1881.5 2331.9,1879.9 2479.3,1879.9 2505.1,1876.1 2535.7,1878.3 2591.5,1876.1 2664.0,1874.7 2694.6,1871.9 2730.9,1870.5 2740.6,1860.8 2747.6,1839.9 2754.6,1803.6 2762.9,1781.9" fill="none" stroke="#ff0000" stroke-width="4.2" stroke-linejoin="round" stroke-linecap="square" />
</g>
<rect x="621" y="651" width="30" height="60" fill="#000"/>
<rect x="622" y="652" width="14" height="28" fill="#000080"/><rect x="636" y="652" width="14" height="28" fill="#8080c0"/>
<rect x="622" y="682" width="14" height="28" fill="#ff0000"/><rect x="636" y="682" width="14" height="28" fill="#ff8080"/>
<text x="657" y="671.5" font-family='"Liberation Mono", monospace' font-size="24" font-weight="bold" fill="#000" text-anchor="start" textLength="410" lengthAdjust="spacingAndGlyphs"  stroke="#000" stroke-width="0.6">EdMay_Blue1999_10AE_069.drf</text>
<text x="1077.7" y="671.5" font-family='"Liberation Mono", monospace' font-size="24" font-weight="bold" fill="#000" text-anchor="start" textLength="257.5" lengthAdjust="spacingAndGlyphs"  stroke="#000" stroke-width="0.6">Max Power = 298.00</text>
<text x="1344" y="671.5" font-family='"Liberation Mono", monospace' font-size="24" font-weight="bold" fill="#000" text-anchor="start" textLength="270.5" lengthAdjust="spacingAndGlyphs"  stroke="#000" stroke-width="0.6">Max Torque = 284.45</text>
<text x="657" y="701.5" font-family='"Liberation Mono", monospace' font-size="24" font-weight="bold" fill="#000" text-anchor="start" textLength="206" lengthAdjust="spacingAndGlyphs"  stroke="#000" stroke-width="0.6">RunFile_043.drf</text>
<text x="872" y="701.5" font-family='"Liberation Mono", monospace' font-size="24" font-weight="bold" fill="#000" text-anchor="start" textLength="257.5" lengthAdjust="spacingAndGlyphs"  stroke="#000" stroke-width="0.6">Max Power = 313.05</text>
<text x="1137" y="701.5" font-family='"Liberation Mono", monospace' font-size="24" font-weight="bold" fill="#000" text-anchor="start" textLength="270" lengthAdjust="spacingAndGlyphs"  stroke="#000" stroke-width="0.6">Max Torque = 276.54</text>
<rect x="621" y="1749" width="30" height="60" fill="#000"/>
<rect x="622" y="1750" width="14" height="28" fill="#000080"/><rect x="636" y="1750" width="14" height="28" fill="#8080c0"/>
<rect x="622" y="1780" width="14" height="28" fill="#ff0000"/><rect x="636" y="1780" width="14" height="28" fill="#ff8080"/>
<text x="657" y="1770.5" font-family='"Liberation Mono", monospace' font-size="24" font-weight="bold" fill="#000" text-anchor="start" textLength="410" lengthAdjust="spacingAndGlyphs"  stroke="#000" stroke-width="0.6">EdMay_Blue1999_10AE_069.drf</text>
<text x="1075" y="1770.5" font-family='"Liberation Mono", monospace' font-size="24" font-weight="bold" fill="#000" text-anchor="start" textLength="331" lengthAdjust="spacingAndGlyphs"  stroke="#000" stroke-width="0.6">Max *Manifold P = 220.97</text>
<text x="660" y="1800.5" font-family='"Liberation Mono", monospace' font-size="24" font-weight="bold" fill="#000" text-anchor="start" textLength="206" lengthAdjust="spacingAndGlyphs"  stroke="#000" stroke-width="0.6">RunFile_043.drf</text>
<text x="877" y="1800.5" font-family='"Liberation Mono", monospace' font-size="24" font-weight="bold" fill="#000" text-anchor="start" textLength="291" lengthAdjust="spacingAndGlyphs"  stroke="#000" stroke-width="0.6">Max *Manifold P = N/A</text>
<rect x="114" y="2053" width="3000" height="60" fill="url(#taskbar)" />
<path d="M114,2054 H299 Q306,2062 306,2083 Q306,2104 299,2113 H114 Z" fill="url(#startbtn)"/>
<path d="M299,2054 Q306,2062 306,2083 Q306,2104 299,2113" fill="none" stroke="#2a6a28" stroke-width="2"/>
<rect x="114" y="2052" width="3000" height="2" fill="#f4f4f0" />
<g transform="translate(134,2066) skewY(-6)"><rect x="2" y="4" width="15" height="13" rx="2" fill="#f0501c"/><rect x="19" y="4" width="15" height="13" rx="2" fill="#78c828"/><rect x="2" y="19" width="15" height="13" rx="2" fill="#1e90f0"/><rect x="19" y="19" width="15" height="13" rx="2" fill="#f8c810"/></g>
<text x="184" y="2097" font-family='"Liberation Sans", sans-serif' font-size="33" font-weight="bold" font-style="italic" fill="#1a3a1a" opacity="0.5" textLength="76" lengthAdjust="spacingAndGlyphs">start</text>
<text x="182" y="2095" font-family='"Liberation Sans", sans-serif' font-size="33" font-weight="bold" fill="#fff" text-anchor="start" textLength="76" lengthAdjust="spacingAndGlyphs" font-style="italic">start</text>
<rect x="328" y="2061" width="315" height="47" rx="4" fill="url(#task1)" stroke="#2a64d8" stroke-width="1.5"/>
<g transform="translate(345,2072)"><path d="M1,4 h10 l3,3 h16 v20 h-29 z" fill="#e8b840" stroke="#9a7010" stroke-width="1.5"/><path d="M3,12 h28 l-3,15 h-25 z" fill="#fcdc78" stroke="#9a7010" stroke-width="1.2"/></g>
<text x="385.5" y="2092.5" font-family='"Liberation Sans", sans-serif' font-size="22.5" font-weight="normal" fill="#fff" text-anchor="start" textLength="229" lengthAdjust="spacingAndGlyphs" >C:\Documents and Se...</text>
<rect x="647" y="2061" width="318" height="47" rx="4" fill="url(#task2)" stroke="#17449a" stroke-width="1.5"/>
<g transform="translate(670,2069) scale(0.95)"><ellipse cx="14" cy="18" rx="13" ry="12" fill="url(#flagchk)"/><path d="M6,2 H27 V9 L17,32 H10 L19,11 H2 V8 Z" fill="#6e6e6e" transform="translate(2,2)"/><path d="M6,0 H26 V8 L16,30 H9 L18,9 H2 V5 Z" fill="url(#red7)"/></g>
<text x="707" y="2093" font-family='"Liberation Sans", sans-serif' font-size="22.5" font-weight="normal" fill="#fff" text-anchor="start" textLength="89" lengthAdjust="spacingAndGlyphs" >WinPEP 7</text>
<rect x="2856" y="2053" width="258" height="60" fill="url(#tray)" />
<rect x="2856" y="2053" width="2" height="60" fill="#0a4fb0" />
<rect x="2757" y="2071" width="24" height="26" fill="#fffde0" stroke="#000" stroke-width="2"/><path d="M2770,2097 l4,5 v-5" fill="#000"/>
<text x="2762" y="2092" font-family='"Liberation Sans", sans-serif' font-size="20" font-weight="bold" fill="#1a1a80">?</text>
<rect x="2810" y="2066" width="11" height="7" fill="none" stroke="#fff" stroke-width="1.8"/><rect x="2806" y="2071" width="11" height="7" fill="#2a5fdc" stroke="#fff" stroke-width="1.8"/><path d="M2809,2091 h9 l-4.5,5 z" fill="#fff"/>
<circle cx="2857" cy="2084" r="17" fill="#3aa6f0" stroke="#7aaee0" stroke-width="2"/><path d="M2862,2075 l-9,9 l9,9" stroke="#fff" stroke-width="4.5" fill="none"/>
<ellipse cx="2894" cy="2083" rx="9" ry="14" fill="#1e5ee8" stroke="#3a7ae8" stroke-width="1.5"/><path d="M2889,2077 l10,10 l-5,5 v-20 l5,5 l-10,10" stroke="#fff" stroke-width="1.8" fill="none"/>
<rect x="2927" y="2069" width="15" height="14" fill="#444466" stroke="#9a9ac0" stroke-width="1.5"/><rect x="2916" y="2075" width="15" height="14" fill="#444466" stroke="#9a9ac0" stroke-width="1.5"/><path d="M2935,2100 l10,-19 l10,19 z" fill="#ffe020" stroke="#806000" stroke-width="1.5"/><rect x="2944" y="2087" width="2.5" height="8" fill="#000"/>
<rect x="2952" y="2070" width="28" height="24" fill="#8a8a8a" stroke="#555" stroke-width="1.5"/><text x="2955" y="2088" font-family='"Liberation Sans", sans-serif' font-size="15" font-weight="bold" fill="#eee">vm</text><path d="M2962,2100 l10,-19 l10,19 z" fill="#ffe020" stroke="#806000" stroke-width="1.5"/><rect x="2971" y="2087" width="2.5" height="8" fill="#000"/>
<text x="3001.5" y="2092" font-family='"Liberation Sans", sans-serif' font-size="22.5" font-weight="normal" fill="#fff" text-anchor="start" textLength="77" lengthAdjust="spacingAndGlyphs" >4:58 PM</text>
</svg>
</body></html>
